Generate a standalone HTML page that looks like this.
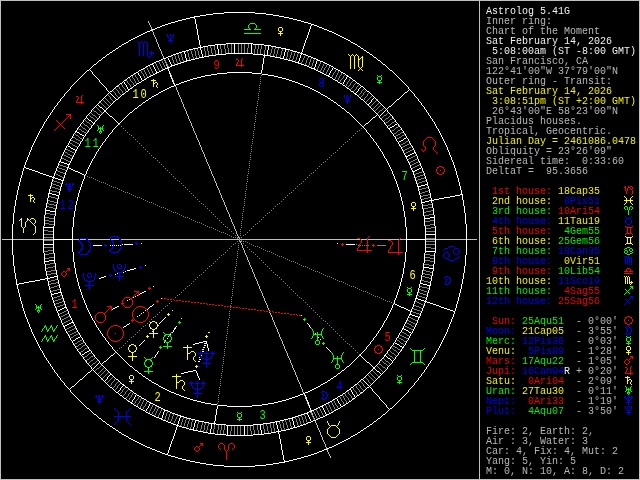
<!DOCTYPE html>
<html><head><meta charset="utf-8"><title>Astrolog 5.41G</title>
<style>
html,body{margin:0;padding:0;background:#000;}
#c{position:relative;width:640px;height:480px;background:#000;overflow:hidden;}
svg{position:absolute;left:0;top:0;}
#g path{fill:none;stroke-width:1;stroke-linecap:square;}
#hn text{font-family:"Liberation Mono",monospace;font-size:13px;letter-spacing:2.2px;}
#hn{will-change:transform;}
#side{will-change:transform;opacity:.95;position:absolute;left:486px;top:7px;font-family:"Liberation Mono",monospace;font-size:10px;line-height:10px;color:#c0c0c0;}
#side div{height:10px;white-space:pre;}
.w{color:#fff}.y{color:#ff0}.r{color:#f00}.g{color:#0f0}.b{color:#00f}
</style></head><body>
<div id="c">
<svg width="640" height="480" viewBox="0 0 640 480">
<rect x="0" y="0" width="640" height="480" fill="#000"/>
<g id="g" transform="translate(0.5,0.5)" shape-rendering="crispEdges">
<path class="frame" d="M0 0h639m-639 1v477m479-477v477m160-477v477m-639 1h639" stroke="#c0c0c0"/>
<path class="axes" d="M148 21v1m1 1v1m1 1v1m1 1v2m1 1v1m1 1v2m1 1v1m1 1v1m1 1v2m1 1v1m1 1v2m1 1v1m1 1v1m1 1v2m1 1v1m1 1v2m1 1v1m1 1v1m1 1v2m1 1v1m1 1v2m1 1v1m1 1v1m1 1v2m1 1v1m1 1v2m1 1v1m1 1v1m1 1v2m1 1v1m1 1v2m1 1v1m1 1v1m1 1v2m1 1v1m1 1v2m1 1v1m1 1v1m1 1v2m1 1v1m1 1v2m1 1v1m1 1v1m1 1v2m1 1v1m1 1v2m1 1v1m1 1v1m1 1v2m1 1v1m1 1v1m1 1v2m1 1v1m1 1v2m1 1v1m1 1v1m1 1v2m1 1v1m1 1v2m1 1v1m1 1v1m1 1v2m1 1v1m1 1v2m1 1v1m1 1v1m1 1v2m1 1v1m1 1v2m1 1v1m1 1v1m1 1v2m1 1v1m1 1v2m1 1v1m1 1v1m1 1v2m1 1v1m1 1v2m1 1v1m1 1v1m1 1v2m1 1v1m1 1v2m1 1v1m1 1v1m1 1v2m1 1v1m1 1v2m1 1v1m1 1v1m1 1v0m-237 1h474m-237 1v0m1 1v1m1 1v1m1 1v2m1 1v1m1 1v2m1 1v1m1 1v1m1 1v2m1 1v1m1 1v2m1 1v1m1 1v1m1 1v2m1 1v1m1 1v2m1 1v1m1 1v1m1 1v2m1 1v1m1 1v2m1 1v1m1 1v1m1 1v2m1 1v1m1 1v2m1 1v1m1 1v1m1 1v2m1 1v1m1 1v2m1 1v1m1 1v1m1 1v2m1 1v1m1 1v2m1 1v1m1 1v1m1 1v2m1 1v1m1 1v2m1 1v1m1 1v1m1 1v2m1 1v1m1 1v2m1 1v1m1 1v1m1 1v2m1 1v1m1 1v1m1 1v2m1 1v1m1 1v2m1 1v1m1 1v1m1 1v2m1 1v1m1 1v2m1 1v1m1 1v1m1 1v2m1 1v1m1 1v2m1 1v1m1 1v1m1 1v2m1 1v1m1 1v2m1 1v1m1 1v1m1 1v2m1 1v1m1 1v2m1 1v1m1 1v1m1 1v2m1 1v1m1 1v2m1 1v1m1 1v1m1 1v2m1 1v1m1 1v2m1 1v1m1 1v1m1 1v2m1 1v1m1 1v2m1 1v1m1 1v1m1 1v1" stroke="#c0c0c0"/>
<path class="deg" d="M227 43v4m4-4v10m7-10v10m3-10v10m3-10v10m4-10v4m-28-3v4m4-4v4m31-4v4m3-4v4m3-4v4m-51-3v2m4-2v4m51-4v4m-61-3v4m3-4v4m65-4v2m3-2v2m3-1v2m-84-1v2m3-2v2m14-2v4m17-4v5m19-5v5m35-5v2m-92-1v1m31-1v4m4-4v4m29-4v4m3-4v4m3-4v5m11-5v3m3-3v4m14-4v2m-101-1v2m28-2v4m49-4v4m13-4v3m15-3v1m-101 0v2m4-2v4m3-4v3m7-3v5m3-5v4m73-4v3m14-3v1m-115 0v1m107-1v4m4-4v2m7-2v1m-121 0v1m11-1v3m24-3v2m58-2v2m24-2v2m-120-1v1m7-1v2m11-2v2m81-2v2m3-2v2m21-2v2m8-2v1m-134 0v1m7-1v2m21-2v2m81-2v2m10-2v2m-115-1v2m21-2v2m97-2v2m11-2v1m4-1v1m-136 0v2m10-2v2m7-2v2m4-2v1m93-1v2m10-2v2m15-2v1m-147 0v1m15-1v2m110-2v1m14-1v1m4-1v1m7-1v1m-153 0v1m15-1v2m116-2v1m18-1v2m-145-1v1m8-1v2m10-2v1m112-1v1m7-1v1m4-1v2m7-2v2m-155-1v0m4 0v1m18-1v1m141-1v0m-166 1v1m4-1v1m7-1v1m11-1v1m124-1v1m8-1v2m11-2v1m4-1v1m-161 0v1m11-1v1m131-1v1m7-1v2m-156-1v1m4-1v1m7-1v1m152-1v1m4-1v1m4-1v0m-178 1v1m15-1v1m144-1v1m18-1v1m4-1v0m-173 1v1m4-1v1m7-1v1m143-1v1m7-1v1m4-1v1m7-1v1m-183 0v0m4 0v1m15-1v1m160-1v0m-182 1v1m4-1v1m11-1v1m4-1v1m155-1v1m4-1v1m3-1v1m4-1v1m-177 0v1m185-1v0m-196 1v0m4 0v1m4-1v1m11-1v1m161-1v1m3-1v1m4-1v1m8-1v1m4-1v0m-198 1v1m11-1v1m186-1v1m-193 0v1m4-1v1m173-1v0m4 0v1m8-1v0m8 0v0m-200 1v0m11 0v1m180-1v1m4-1v1m4-1v1m-207 0v0m9 0v1m3-1v1m4-1v1m175-1v0m20 0v0m-214 1v0m4 0v1m197-1v1m4-1v1m4-1v0m4 0v0m-212 1v1m12-1v1m3-1v1m192-1v1m4-1v1m-215 0v0m8 0v0m195 0v0m4 0v1m-206 0v0m4 0v0m4 0v1m8-1v0m193 0v1m4-1v0m8 0v0m-225 1v0m5 0v1m4-1v1m200-1v0m7 0v0m8 0v1m-223 0v0m12 0v1m199-1v0m3 0v1m13-1v0m-226 1v1m4-1v0m4 0v1m213-1v0m4 0v0m-220 1v0m7 0v0m200 0v0m8 0v1m4-1v0m5 0v0m-236 1v0m8 0v0m5 0v1m3-1v0m214 0v1m5-1v0m-234 1v0m8 0v0m217 0v1m8-1v0m5 0v0m-242 1v0m5 0v1m8-1v1m4-1v0m215 0v0m4 0v1m5-1v0m-240 1v0m227 0v0m3 0v0m9 0v0m-238 1v1m4-1v0m8 0v0m216 0v0m5 0v0m4 0v1m-241 0v0m9 0v0m227 0v0m13 0v0m-248 1v0m4 0v0m5 0v1m225-1v0m5 0v0m8 0v0m-251 1v0m5 0v0m4 0v0m233 0v0m8 0v0m4 0v0m-253 1v0m5 0v1m4-1v1m4-1v0m227 0v0m8 0v1m4-1v0m-251 1v0m250 0v0m5 0v0m-254 1v1m4-1v0m4 0v0m237 0v0m3 0v1m5-1v0m-261 1v0m13 0v0m239 0v0m8 0v1m-259 0v0m8 0v0m5 0v0m237 0v0m4 0v0m10 0v0m-263 1v0m8 0v0m244 0v0m5 0v0m5 0v0m-267 1v0m6 0v1m8-1v0m242 0v0m5 0v0m5 0v0m-265 1v0m259 0v1m5-1v0m-267 1v0m4 0v0m5 0v0m257 0v0m9 0v0m-274 1v0m4 0v0m5 0v0m251 0v0m4 0v0m9 0v0m-277 1v0m5 0v0m4 0v0m5 0v0m253 0v0m9 0v0m-275 1v0m5 0v0m4 0v0m256 0v0m9 0v0m5 0v0m-278 1v0m5 0v0m4 0v0m263 0v0m5 0v0m-276 1v0m5 0v0m4 0v0m261 0v0m5 0v0m4 0v0m-278 1v0m5 0v0m263 0v0m5 0v0m4 0v0m-285 1v0m9 0v0m5 0v0m261 0v0m5 0v0m4 0v0m-283 1v0m9 0v0m269 0v0m4 0v0m6 0v0m-287 1v0m9 0v0m267 0v0m4 0v0m6 0v0m-291 1v0m6 0v0m274 0v0m4 0v0m6 0v0m-289 1v0m6 0v0m276 0v0m5 0h1m-287 1h1m5 0v0m274 0v0m5 0v0m-289 1v0m6 0v0m5 0v0m277 0v0m10 0v0m-297 1v0m6 0v0m5 0v0m275 0v0m10 0v0m-299 1v0m4 0v0m6 0h1m287 0v0m-297 1v0m4 0h1m6 0v0m284 0h1m5 0v0m-300 1v0m5 0v0m288 0v0m6 0v0m-298 1h1m4 0v0m286 0v0m6 0v0m5 0v0m-300 1v0m4 0v0m284 0v0m5 0h1m5 0v0m-308 1v0m10 0v0m291 0v0m5 0h1m-306 1v0m10 0v0m289 0v0m5 0v0m6 0v0m-309 1v0m297 0v0m5 0v0m6 0v0m-312 1v0m5 0h1m298 0h1m5 0h1m-310 1v0m6 0v0m296 0v0m6 0v0m-307 1v0m6 0v0m300 0v0m-310 1v0m5 0h1m5 0v0m297 0h1m10 0v0m-318 1v0m6 0v0m300 0v0m11 0v0m-316 1v0m6 0v0m308 0h1m-319 1v0m5 0h1m5 0v0m306 0v0m6 0v0m-322 1h1m5 0v0m309 0v0m6 0v0m-319 1v0m5 0v0m306 0h1m5 0h1m-317 1h1m4 0v0m304 0v0m6 0v0m6 0v0m-319 1h1m311 0v0m5 0h1m-328 1v0m12 0v0m308 0h1m5 0v0m-325 1v0m318 0v0m5 0h1m5 0v0m-328 1h1m319 0h1m5 0h1m-331 1v0m6 0v0m317 0v0m6 0v0m-328 1h1m5 0v0m320 0h1m-325 1v0m5 0h1m316 0h1m-328 1v0m6 0h1m5 0v0m314 0v0m-325 1h1m6 0h1m329 0v0m-335 1h1m6 0v0m326 0h1m-338 1v0m6 0h1m329 0v0m-335 1h1m6 0h1m325 0h1m5 0h1m-338 1v0m7 0v0m322 0h1m5 0h1m-335 1h1m326 0v0m5 0h1m-331 1h1m327 0h1m7 0v0m-334 1v0m324 0h1m7 0h1m-345 1v0m342 0h1m-342 1h1m338 0h1m6 0h1m-345 1h1m334 0h1m6 0h1m-347 1v0m6 0h1m337 0h1m-344 1h1m6 0h1m333 0h1m-340 1v0m7 0v0m330 0h1m-343 1h1m5 0h1m-5 1h1m5 0h1m344 0h1m-350 1h1m5 0v0m341 0h1m-353 1v0m7 0h1m342 0h1m-350 1h1m7 0h1m338 0h1m7 0v0m-353 1h1m342 0h1m7 0h1m-350 1h1m346 0h1m-346 1h1m342 0h1m6 0h1m-10 1h1m6 0h1m-3 1h1m-357 1h1m353 0h1m6 0h1m-360 1h2m348 0h1m6 0h1m-355 1h2m350 0h1m-359 1h1m8 0h1m346 0h1m-355 1h2m350 0h1m-350 1h2m-8 1h1m8 0h1m-8 1h1m363 0h1m-363 1h2m357 0h2m-367 1h1m8 0h1m352 0h2m-362 1h1m357 0h1m8 0h1m-366 1h1m361 0h2m-362 1h1m356 0h2m-357 1h1m352 0h1m8 0h1m-4 1h2m-5 1h2m-368 1h1m363 0h1m8 0h1m-372 1h2m366 0h2m-367 1h2m360 0h2m-370 1h1m8 0h1m356 0h1m-365 1h2m1 1h2m-8 1h1m8 0h1m-8 1h2m372 0h2m-373 1h2m365 0h3m-367 1h1m360 0h2m-372 1h2m377 0h1m-377 1h4m369 0h2m-370 1h2m363 0h2m-4 1h1m7 1h2m-7 1h4m-379 1h2m370 0h2m-371 1h3m374 0h2m-375 1h2m367 0h3m-6 1h2m-376 1h2m1 1h3m1 1h2m-10 1h2m1 1h4m375 0h4m-378 1h2m366 0h5m-381 1h2m1 1h3m376 0h4m-379 1h2m368 0h4m4 2h2m-7 1h4m-7 1h2m-380 1h4m1 1h4m375 0h4m-9 1h4m-384 2h4m1 1h5m-10 2h4m382 0h4m-385 1h4m372 0h4m-385 2h4m1 1h4m377 0h4m-9 1h4m2 2h4m-10 1h5m-387 2h4m1 1h5m372 0h10m-392 3h10m-10 3h10m372 1h10m-392 2h10m372 1h10m-10 3h10m-392 3h10m372 0h5m1 1h4m-387 2h5m-10 1h4m2 2h4m-9 1h4m377 0h4m1 1h4m-385 2h4m372 0h4m-385 1h4m382 0h4m-10 2h5m1 1h4m-384 2h4m-9 1h4m375 0h4m1 1h4m-380 1h2m-7 1h4m-7 1h2m4 2h4m368 0h2m-379 1h4m376 0h3m1 1h2m-381 1h5m366 0h2m-378 1h4m375 0h4m1 1h2m-10 1h2m1 1h3m1 1h2m-376 1h2m-6 1h3m367 0h2m-375 1h2m374 0h3m-371 1h2m370 0h2m-379 1h4m-7 1h2m7 1h1m-4 1h2m363 0h2m-370 1h2m369 0h4m-377 1h1m377 0h2m-372 1h2m360 0h1m-367 1h3m365 0h2m-373 1h2m372 0h2m-8 1h1m8 0h1m-8 1h2m1 1h2m-365 1h1m356 0h1m8 0h1m-370 1h2m360 0h2m-367 1h2m366 0h2m-372 1h1m8 0h1m363 0h1m-368 1h2m-5 1h2m-4 1h1m8 0h1m352 0h1m-357 1h2m356 0h1m-362 1h2m361 0h1m-366 1h1m8 0h1m357 0h1m-362 1h2m352 0h1m8 0h1m-367 1h2m357 0h2m-363 1h1m363 0h1m-8 1h1m8 0h1m-8 1h2m-350 1h1m350 0h2m-355 1h1m346 0h1m8 0h1m-359 1h1m350 0h2m-355 1h1m6 0h1m348 0h2m-360 1h1m6 0h1m353 0h1m-357 1h1m-3 1h1m6 0h1m-10 1h1m6 0h1m342 0h1m-346 1h1m346 0h1m-350 1h1m7 0h1m342 0h1m-353 1v0m7 0h1m338 0h1m7 0h1m-350 1h1m342 0h1m7 0v0m-353 1h1m341 0v0m5 0h1m-350 1h1m344 0h1m5 0h1m-5 1h1m5 0h1m-343 1h1m330 0v0m7 0v0m-340 1h1m333 0h1m6 0h1m-344 1h1m337 0h1m6 0v0m-347 1h1m6 0h1m334 0h1m-345 1h1m6 0h1m338 0h1m-342 1h1m342 0v0m-345 1h1m7 0h1m324 0v0m-334 1v0m7 0h1m327 0h1m-331 1h1m5 0v0m326 0h1m-335 1h1m5 0h1m322 0v0m7 0v0m-338 1h1m5 0h1m325 0h1m6 0h1m-335 1v0m329 0h1m6 0v0m-338 1h1m326 0v0m6 0h1m-335 1v0m329 0h1m6 0h1m-325 1v0m314 0v0m5 0h1m6 0v0m-328 1h1m316 0h1m5 0v0m-325 1h1m320 0v0m5 0h1m-328 1v0m6 0v0m317 0v0m6 0v0m-331 1h1m5 0h1m319 0h1m-328 1v0m5 0h1m5 0v0m318 0v0m-325 1v0m5 0h1m308 0v0m12 0v0m-328 1h1m5 0v0m311 0h1m-319 1v0m6 0v0m6 0v0m304 0v0m4 0h1m-317 1h1m5 0h1m306 0v0m5 0v0m-319 1v0m6 0v0m309 0v0m5 0h1m-322 1v0m6 0v0m306 0v0m5 0h1m5 0v0m-319 1h1m308 0v0m6 0v0m-316 1v0m11 0v0m300 0v0m6 0v0m-318 1v0m10 0h1m297 0v0m5 0h1m5 0v0m-310 1v0m300 0v0m6 0v0m-307 1v0m6 0v0m296 0v0m6 0v0m-310 1h1m5 0h1m298 0h1m5 0v0m-312 1v0m6 0v0m5 0v0m297 0v0m-309 1v0m6 0v0m5 0v0m289 0v0m10 0v0m-306 1h1m5 0v0m291 0v0m10 0v0m-308 1v0m5 0h1m5 0v0m284 0v0m4 0v0m-300 1v0m5 0v0m6 0v0m286 0v0m4 0h1m-298 1v0m6 0v0m288 0v0m5 0v0m-300 1v0m5 0h1m284 0v0m6 0h1m4 0v0m-297 1v0m287 0h1m6 0v0m4 0v0m-299 1v0m10 0v0m275 0v0m5 0v0m6 0v0m-297 1v0m10 0v0m277 0v0m5 0v0m6 0v0m-289 1v0m5 0v0m274 0v0m5 0h1m-287 1h1m5 0v0m276 0v0m6 0v0m-289 1v0m6 0v0m4 0v0m274 0v0m6 0v0m-291 1v0m6 0v0m4 0v0m267 0v0m9 0v0m-287 1v0m6 0v0m4 0v0m269 0v0m9 0v0m-283 1v0m4 0v0m5 0v0m261 0v0m5 0v0m9 0v0m-285 1v0m4 0v0m5 0v0m263 0v0m5 0v0m-278 1v0m4 0v0m5 0v0m261 0v0m4 0v0m5 0v0m-276 1v0m5 0v0m263 0v0m4 0v0m5 0v0m-278 1v0m5 0v0m9 0v0m256 0v0m4 0v0m5 0v0m-275 1v0m9 0v0m253 0v0m5 0v0m4 0v0m5 0v0m-277 1v0m9 0v0m4 0v0m251 0v0m5 0v0m4 0v0m-274 1v0m9 0v0m4 0v1m253-1v0m5 0v0m4 0v0m-267 1v0m259 0v1m5-1v0m-265 1v0m5 0v0m5 0v0m242 0v0m14 0v0m-267 1v0m5 0v0m5 0v0m244 0v0m8 0v0m-263 1v0m5 0v1m5-1v0m4 0v0m237 0v0m5 0v0m8 0v0m-255 1v1m4-1v0m239 0v0m5 0v1m8-1v0m-261 1v0m8 0v0m237 0v0m4 0v0m-250 1v0m5 0v0m3 0v1m239-1v1m4-1v1m4-1v0m-251 1v0m12 0v0m227 0v0m13 0v0m-253 1v0m4 0v0m8 0v0m229 0v1m4-1v0m4 0v0m5 0v0m-251 1v0m8 0v0m5 0v0m230 0v0m4 0v0m-248 1v0m8 0v1m5-1v0m227 0v0m5 0v1m4-1v0m-237 1v0m5 0v0m216 0v0m8 0v0m-234 1v0m4 0v1m5-1v0m3 0v0m215 0v1m8-1v1m4-1v0m-240 1v0m9 0v0m3 0v1m212-1v0m17 0v0m-242 1v0m5 0v0m4 0v1m217-1v1m4-1v0m8 0v0m-234 1v0m8 0v1m211-1v0m8 0v0m8 0v0m-236 1v0m5 0v0m12 0v0m200 0v0m4 0v1m3-1v0m5 0v1m-225 0v0m4 0v0m8 0v1m202-1v1m7-1v0m-222 1v0m4 0v1m12-1v0m203 0v1m4-1v1m4-1v0m-215 1v0m3 0v1m4-1v0m197 0v1m12-1v0m-225 1v0m8 0v0m7 0v1m190-1v0m12 0v0m4 0v0m-214 1v1m4-1v1m8-1v0m184 0v1m3-1v1m8-1v0m4 0v1m4-1v0m-208 1v1m4-1v1m197-1v1m-209 0v0m4 0v0m190 0v1m4-1v1m3-1v1m12-1v0m-214 1v0m4 0v1m4-1v1m4-1v1m8-1v0m172 0v1m19-1v0m-192 1v1m177-1v1m4-1v1m3-1v0m-200 1v0m4 0v1m4-1v0m12 0v0m170 0v1m11-1v1m-194 0v1m8-1v1m4-1v1m3-1v1m161-1v1m11-1v1m4-1v1m-195 0v0m188 0v1m11-1v0m-196 1v0m8 0v1m4-1v1m3-1v1m4-1v1m155-1v1m4-1v1m11-1v1m4-1v1m-22 0v1m15-1v1m-179 0v1m4-1v0m3 0v1m4-1v1m7-1v1m143-1v1m7-1v1m4-1v1m11-1v0m-180 1v1m18-1v1m144-1v1m15-1v1m-181 0v0m7 0v1m4-1v1m7-1v2m145-2v1m7-1v1m4-1v1m-171 0v0m18 0v2m4-2v1m131-1v1m11-1v1m-161 0v1m4-1v1m19-1v1m124-1v1m11-1v1m7-1v1m4-1v1m-158 0v2m7-2v2m126-2v1m7-1v2m11-2v1m-159 0v0m11 0v2m8-2v1m7-1v1m112-1v1m7-1v2m11-2v1m7-1v0m-134 1v1m113-1v2m18-2v1m-153 0v1m7-1v1m4-1v1m7-1v2m7-2v1m3-1v2m97-2v2m7-2v2m10-2v2m8-2v1m-147 0v1m18-1v2m97-2v2m3-2v1m18-1v2m-133-1v1m4-1v1m14-1v2m10-2v2m81-2v2m21-2v2m-119-1v2m10-2v4m11-4v2m3-2v2m68-2v5m13-5v2m4-2v3m7-3v2m10-2v1m-134 0v1m11-1v2m24-2v2m58-2v2m4-2v4m13-4v4m21-4v1m-117 0v2m10-2v3m17-3v4m4-4v5m45-5v4m17-4v3m21-3v1m-121 0v1m21-1v3m3-3v4m17-4v4m3-4v4m7-4v5m3-5v10m3-10v10m3-10v10m7-10v10m3-10v5m3-5v4m4-4v4m30-4v2m11-2v1m-115 0v1m24-1v3m60-3v4m24-4v2m-105-1v1m4-1v2m6-1v2m75-2v4m3-4v4m7-4v2m3-2v2m4-2v1m-88 0v2m13-2v4m51-4v4m-61-3v2m3-2v2m11-2v4m3-4v4m3-4v4m31-4v4m4-4v4m-28-3v4m21-4v4m17-4v2" stroke="#808080"/>
<path class="deg5" d="M234 43v10m17-10v10m-34-9v4m51-3v4m-68-2v2m18 0v5m67-5v2m-84-1v3m66-3v5m-83-4v2m100-1v3m17-2v1m-116 0v3m17-3v2m98-1v2m-17-1v2m-116-1v0m1 1v1m18-1v2m113-2v2m18-1v1m-148 0v1m129 0v1m18-1v2m-146-1v1m-18 0v1m19 0v1m144-1v2m-162-1v1m1 1v1m160-1v1m19-1v0m-1 1v1m-177 0v1m176 0v0m-175 1v1m174-1v1m-193 0v0m1 1v1m191-1v1m-190 1v0m189 0v0m-188 1v1m207-1v0m-1 1v1m-205 0v1m204 0v0m-203 1v0m202 0v1m-221 0v0m1 1v1m219-1v1m-218 1v0m217 0v0m-216 1v1m235 0v0m-234 1v1m233-1v0m-1 1v0m-231 1v0m230 0v1m-1 1v0m-248 1v0m247 0v0m-246 1v0m245 0v0m-244 1v0m1 1v0m1 1v0m1 1v0m260 0v0m-259 1v0m258 0v0m-257 1v0m256 0v0m-1 1v1m-1 1v0m-1 1v0m-272 1v0m271 0v0m-270 1v0m1 1v0m1 1h1m1 1v0m1 1v0m283 0v0m-282 1v0m281 0v0m-1 1v0m-1 1v0m-1 1v0m-1 1v0m-1 1v0m-1 1v0m-293 1v0m1 1v0m1 1v0m1 1h1m1 1v0m1 1v0m1 1v0m304 0v0m-2 1h1m-2 1v0m-2 1h1m-3 1h1m-2 1v0m-313 3v0m1 1h1m1 1v0m1 1h1m1 1h1m1 1v0m322 1v0m-2 1h1m-2 1v0m-2 1h1m-3 1h1m-2 1v0m-331 3v0m1 1h1m1 1v0m1 1h1m1 1h1m1 1v0m339 2h1m-3 1h1m-3 1h1m-3 1h1m-3 1h1m-348 5h1m1 1h2m1 1h2m1 1h1m353 3v0m-2 1h1m-3 1h1m-3 1h1m-3 1h1m-361 6h1m1 1h2m1 1h2m1 1h1m363 4h2m-6 1h3m-6 1h2m-371 7h2m1 1h3m1 1h2m371 5h2m-6 1h3m-6 1h2m-379 8h4m1 1h5m375 6h4m-10 1h5m-386 9h10m372 7h10m-392 10h10m372 7h10m-386 9h5m-10 1h4m375 6h5m1 1h4m-379 8h2m-6 1h3m-6 1h2m371 5h2m1 1h3m1 1h2m-371 7h2m-6 1h3m-6 1h2m363 4h1m1 1h2m1 1h2m1 1h1m-361 6h1m-3 1h1m-3 1h1m-3 1h1m-2 1v0m353 3h1m1 1h2m1 1h2m1 1h1m-348 5h1m-3 1h1m-3 1h1m-3 1h1m-3 1h1m339 2v0m1 1h1m1 1h1m1 1v0m1 1h1m1 1v0m-331 3v0m-2 1h1m-3 1h1m-2 1v0m-2 1h1m-2 1v0m322 1v0m1 1h1m1 1h1m1 1v0m1 1h1m1 1v0m-313 3v0m-2 1h1m-3 1h1m-2 1v0m-2 1h1m-2 1v0m304 0v0m1 1v0m1 1v0m1 1h1m1 1v0m1 1v0m1 1v0m-293 1v0m-1 1v0m-1 1v0m-1 1v0m-1 1v0m-1 1v0m-1 1v0m281 0v0m-282 1v0m283 0v0m1 1v0m1 1h1m1 1v0m1 1v0m-270 1v0m271 0v0m-272 1v0m-1 1v0m-1 1v1m-1 1v0m256 0v0m-257 1v0m258 0v0m-259 1v0m260 0v0m1 1v0m1 1v0m1 1v0m-244 1v0m245 0v0m-246 1v0m247 0v0m-248 1v0m-1 1v1m230 0v0m-231 1v0m232 0v1m-233 0v0m-1 1v0m235 0v1m-216 1v0m217 0v0m-218 1v1m219-1v1m-220 1v1m221-1v0m-19 1v0m-203 1v0m204 0v1m-205 0v1m206 0v1m-207 0v0m19 1v0m189 0v0m-190 1v1m191-1v1m-192 1v1m174-1v1m19-1v0m-194 2v0m176 0v1m-177 0v1m18 0v1m160-1v1m-179 0v0m18 1v2m162-2v1m-18 0v1m19 0v1m-164 0v2m146-2v1m-128 0v1m129 0v1m-148 0v1m18-1v2m113-2v2m18-1v1m-115 0v2m-17-1v2m115-2v3m18-3v0m-35 1v2m-82-1v3m17-3v5m-34-4v1m83-1v5m-33-4v10m17-10v10m33-10v3m17-3v2m-101 0v2m17 0v4m68-4v2m-17-1v4" stroke="#ffffff"/>
<path class="ring" d="M224 12h30m-41 1h10m32 0h10m-59 1h6m54 0h6m-72 1h5m68 0h5m-83 1h4m80 0h4m-93 1h4m90 0h4m-102 1h3m100 0h3m-110 1h3m108 0h3m-118 1h3m116 0h3m-125 1h2m124 0h2m-132 1h3m130 0h3m-139 1h2m138 0h2m-145 1h2m144 0h2m-151 1h2m150 0h2m-156 1h1m156 0h1m-161 1h2m160 0h2m-166 1h1m166 0h1m-171 1h2m170 0h2m-176 1h1m176 0h1m-181 1h2m180 0h2m-186 1h1m186 0h1m-190 1h1m190 0h1m-194 1h1m194 0h1m-198 1h1m198 0h1m-202 1h1m202 0h1m-206 1h1m206 0h1m-210 1h1m210 0h1m-214 1h1m214 0h1m-218 1h1m218 0h1m-221 1v0m222 0v0m-224 1h1m224 0h1m-228 1h1m228 0h1m-232 1h1m232 0h1m-235 1v0m236 0v0m-238 1h1m238 0h1m-241 1v0m242 0v0m-244 1h1m244 0h1m-247 1v0m248 0v0m-250 1h1m250 0h1m-253 1v0m254 0v0m-256 1h1m256 0h1m-259 1v0m260 0v0m-262 1h1m262 0h1m-265 1v0m266 0v0m-267 1v0m268 0v0m-270 1h1m270 0h1m-273 1v0m274 0v0m-275 1v0m276 0v0m-278 1h1m278 0h1m-281 1v0m282 0v0m-283 1v0m284 0v0m-285 1v0m286 0v0m-288 1h1m288 0h1m-291 1v0m292 0v0m-293 1v0m294 0v0m-295 1v0m296 0v0m-297 1v0m298 0v0m-299 1v0m300 0v0m-302 1h1m302 0h1m-305 1v0m306 0v0m-307 1v0m308 0v0m-309 1v0m310 0v0m-311 1v0m312 0v0m-313 1v0m314 0v0m-315 1v0m316 0v0m-317 1v0m318 0v0m-319 1v0m320 0v0m-321 1v0m322 0v0m-323 1v0m324 0v0m-325 1v0m326 0v0m-327 1v0m328 0v0m-329 1v0m330 0v0m-331 1v0m332 0v0m-333 1v0m334 0v0m-335 1v0m336 0v0m-337 1v1m338-1v1m-339 1v0m340 0v0m-341 1v0m342 0v0m-343 1v0m344 0v0m-345 1v0m346 0v0m-347 1v0m348 0v0m-349 1v1m350-1v1m-351 1v0m352 0v0m-353 1v0m354 0v0m-355 1v0m356 0v0m-357 1v1m358-1v1m-359 1v0m360 0v0m-361 1v0m362 0v0m-363 1v1m364-1v1m-365 1v0m366 0v0m-367 1v0m368 0v0m-369 1v1m370-1v1m-371 1v0m372 0v0m-373 1v1m374-1v1m-375 1v0m376 0v0m-377 1v1m378-1v1m-379 1v0m380 0v0m-381 1v1m382-1v1m-383 1v0m384 0v0m-385 1v1m386-1v1m-387 1v0m388 0v0m-389 1v1m390-1v1m-391 1v1m392-1v1m-393 1v1m394-1v1m-395 1v0m396 0v0m-397 1v1m398-1v1m-399 1v1m400-1v1m-401 1v1m402-1v1m-403 1v1m404-1v1m-405 1v1m406-1v1m-407 1v1m408-1v1m-409 1v1m410-1v1m-411 1v1m412-1v1m-413 1v1m414-1v1m-415 1v2m416-2v2m-417 1v1m418-1v1m-419 1v2m420-2v2m-421 1v1m422-1v1m-423 1v2m424-2v2m-425 1v1m426-1v1m-427 1v2m428-2v2m-429 1v2m430-2v2m-431 1v2m432-2v2m-433 1v3m434-3v3m-435 1v2m436-2v2m-437 1v3m438-3v3m-439 1v3m440-3v3m-441 1v3m442-3v3m-443 1v4m444-4v4m-445 1v4m446-4v4m-447 1v5m448-5v5m-449 1v6m450-6v6m-451 1v10m452-10v10m-453 1v30m454-30v30m-453 1v10m452-10v10m-451 1v6m450-6v6m-449 1v5m448-5v5m-447 1v4m446-4v4m-445 1v4m444-4v4m-443 1v3m442-3v3m-441 1v3m440-3v3m-439 1v3m438-3v3m-437 1v2m436-2v2m-435 1v3m434-3v3m-433 1v2m432-2v2m-431 1v2m430-2v2m-429 1v2m428-2v2m-427 1v1m426-1v1m-425 1v2m424-2v2m-423 1v1m422-1v1m-421 1v2m420-2v2m-419 1v1m418-1v1m-417 1v2m416-2v2m-415 1v1m414-1v1m-413 1v1m412-1v1m-411 1v1m410-1v1m-409 1v1m408-1v1m-407 1v1m406-1v1m-405 1v1m404-1v1m-403 1v1m402-1v1m-401 1v1m400-1v1m-399 1v1m398-1v1m-397 1v0m396 0v0m-395 1v1m394-1v1m-393 1v1m392-1v1m-391 1v1m390-1v1m-389 1v0m388 0v0m-387 1v1m386-1v1m-385 1v0m384 0v0m-383 1v1m382-1v1m-381 1v0m380 0v0m-379 1v1m378-1v1m-377 1v0m376 0v0m-375 1v1m374-1v1m-373 1v0m372 0v0m-371 1v1m370-1v1m-369 1v0m368 0v0m-367 1v0m366 0v0m-365 1v1m364-1v1m-363 1v0m362 0v0m-361 1v0m360 0v0m-359 1v1m358-1v1m-357 1v0m356 0v0m-355 1v0m354 0v0m-353 1v0m352 0v0m-351 1v1m350-1v1m-349 1v0m348 0v0m-347 1v0m346 0v0m-345 1v0m344 0v0m-343 1v0m342 0v0m-341 1v0m340 0v0m-339 1v1m338-1v1m-337 1v0m336 0v0m-335 1v0m334 0v0m-333 1v0m332 0v0m-331 1v0m330 0v0m-329 1v0m328 0v0m-327 1v0m326 0v0m-325 1v0m324 0v0m-323 1v0m322 0v0m-321 1v0m320 0v0m-319 1v0m318 0v0m-317 1v0m316 0v0m-315 1v0m314 0v0m-313 1v0m312 0v0m-311 1v0m310 0v0m-309 1v0m308 0v0m-307 1v0m306 0v0m-305 1h1m302 0h1m-302 1v0m300 0v0m-299 1v0m298 0v0m-297 1v0m296 0v0m-295 1v0m294 0v0m-293 1v0m292 0v0m-291 1h1m288 0h1m-288 1v0m286 0v0m-285 1v0m284 0v0m-283 1v0m282 0v0m-281 1h1m278 0h1m-278 1v0m276 0v0m-275 1v0m274 0v0m-273 1h1m270 0h1m-270 1v0m268 0v0m-267 1v0m266 0v0m-265 1h1m262 0h1m-262 1v0m260 0v0m-259 1h1m256 0h1m-256 1v0m254 0v0m-253 1h1m250 0h1m-250 1v0m248 0v0m-247 1h1m244 0h1m-244 1v0m242 0v0m-241 1h1m238 0h1m-238 1v0m236 0v0m-235 1h1m232 0h1m-232 1h1m228 0h1m-228 1h1m224 0h1m-224 1v0m222 0v0m-221 1h1m218 0h1m-218 1h1m214 0h1m-214 1h1m210 0h1m-210 1h1m206 0h1m-206 1h1m202 0h1m-202 1h1m198 0h1m-198 1h1m194 0h1m-194 1h1m190 0h1m-190 1h1m186 0h1m-186 1h2m180 0h2m-181 1h1m176 0h1m-176 1h2m170 0h2m-171 1h1m166 0h1m-166 1h2m160 0h2m-161 1h1m156 0h1m-156 1h2m150 0h2m-151 1h2m144 0h2m-145 1h2m138 0h2m-139 1h3m130 0h3m-132 1h2m124 0h2m-125 1h3m116 0h3m-118 1h3m108 0h3m-110 1h3m100 0h3m-102 1h4m90 0h4m-93 1h4m80 0h4m-83 1h5m68 0h5m-72 1h6m54 0h6m-59 1h10m32 0h10m-41 1h30" stroke="#ffffff"/>
<path class="ring" d="M226 43h26m-37 1h10m28 0h10m-55 1h6m50 0h6m-67 1h4m64 0h4m-77 1h4m74 0h4m-87 1h4m84 0h4m-96 1h3m94 0h3m-103 1h2m102 0h2m-110 1h3m108 0h3m-117 1h2m116 0h2m-123 1h2m122 0h2m-129 1h2m128 0h2m-134 1h1m134 0h1m-139 1h2m138 0h2m-144 1h1m144 0h1m-149 1h2m148 0h2m-154 1h1m154 0h1m-158 1h1m158 0h1m-163 1h2m162 0h2m-168 1h1m168 0h1m-172 1h1m172 0h1m-176 1h1m176 0h1m-180 1h1m180 0h1m-184 1h1m184 0h1m-187 1v0m188 0v0m-190 1h1m190 0h1m-194 1h1m194 0h1m-198 1h1m198 0h1m-201 1v0m202 0v0m-204 1h1m204 0h1m-208 1h1m208 0h1m-211 1v0m212 0v0m-214 1h1m214 0h1m-217 1v0m218 0v0m-220 1h1m220 0h1m-223 1v0m224 0v0m-225 1v0m226 0v0m-228 1h1m228 0h1m-231 1v0m232 0v0m-233 1v0m234 0v0m-236 1h1m236 0h1m-239 1v0m240 0v0m-241 1v0m242 0v0m-244 1h1m244 0h1m-247 1v0m248 0v0m-249 1v0m250 0v0m-251 1v0m252 0v0m-253 1v0m254 0v0m-256 1h1m256 0h1m-259 1v0m260 0v0m-261 1v0m262 0v0m-263 1v0m264 0v0m-265 1v0m266 0v0m-267 1v0m268 0v0m-269 1v0m270 0v0m-271 1v0m272 0v0m-273 1v0m274 0v0m-275 1v0m276 0v0m-277 1v0m278 0v0m-279 1v0m280 0v0m-281 1v0m282 0v0m-283 1v0m284 0v0m-285 1v0m286 0v0m-287 1v0m288 0v0m-289 1v0m290 0v0m-291 1v0m292 0v0m-293 1v0m294 0v0m-295 1v1m296-1v1m-297 1v0m298 0v0m-299 1v0m300 0v0m-301 1v0m302 0v0m-303 1v0m304 0v0m-305 1v1m306-1v1m-307 1v0m308 0v0m-309 1v0m310 0v0m-311 1v1m312-1v1m-313 1v0m314 0v0m-315 1v0m316 0v0m-317 1v1m318-1v1m-319 1v0m320 0v0m-321 1v0m322 0v0m-323 1v1m324-1v1m-325 1v0m326 0v0m-327 1v1m328-1v1m-329 1v0m330 0v0m-331 1v1m332-1v1m-333 1v1m334-1v1m-335 1v0m336 0v0m-337 1v1m338-1v1m-339 1v1m340-1v1m-341 1v1m342-1v1m-343 1v0m344 0v0m-345 1v1m346-1v1m-347 1v1m348-1v1m-349 1v1m350-1v1m-351 1v1m352-1v1m-353 1v1m354-1v1m-355 1v2m356-2v2m-357 1v1m358-1v1m-359 1v1m360-1v1m-361 1v2m362-2v2m-363 1v1m364-1v1m-365 1v2m366-2v2m-367 1v1m368-1v1m-369 1v2m370-2v2m-371 1v2m372-2v2m-373 1v2m374-2v2m-375 1v3m376-3v3m-377 1v2m378-2v2m-379 1v3m380-3v3m-381 1v4m382-4v4m-383 1v4m384-4v4m-385 1v4m386-4v4m-387 1v6m388-6v6m-389 1v10m390-10v10m-391 1v26m392-26v26m-391 1v10m390-10v10m-389 1v6m388-6v6m-387 1v4m386-4v4m-385 1v4m384-4v4m-383 1v4m382-4v4m-381 1v3m380-3v3m-379 1v2m378-2v2m-377 1v3m376-3v3m-375 1v2m374-2v2m-373 1v2m372-2v2m-371 1v2m370-2v2m-369 1v1m368-1v1m-367 1v2m366-2v2m-365 1v1m364-1v1m-363 1v2m362-2v2m-361 1v1m360-1v1m-359 1v1m358-1v1m-357 1v2m356-2v2m-355 1v1m354-1v1m-353 1v1m352-1v1m-351 1v1m350-1v1m-349 1v1m348-1v1m-347 1v1m346-1v1m-345 1v0m344 0v0m-343 1v1m342-1v1m-341 1v1m340-1v1m-339 1v1m338-1v1m-337 1v0m336 0v0m-335 1v1m334-1v1m-333 1v1m332-1v1m-331 1v0m330 0v0m-329 1v1m328-1v1m-327 1v0m326 0v0m-325 1v1m324-1v1m-323 1v0m322 0v0m-321 1v0m320 0v0m-319 1v1m318-1v1m-317 1v0m316 0v0m-315 1v0m314 0v0m-313 1v1m312-1v1m-311 1v0m310 0v0m-309 1v0m308 0v0m-307 1v1m306-1v1m-305 1v0m304 0v0m-303 1v0m302 0v0m-301 1v0m300 0v0m-299 1v0m298 0v0m-297 1v1m296-1v1m-295 1v0m294 0v0m-293 1v0m292 0v0m-291 1v0m290 0v0m-289 1v0m288 0v0m-287 1v0m286 0v0m-285 1v0m284 0v0m-283 1v0m282 0v0m-281 1v0m280 0v0m-279 1v0m278 0v0m-277 1v0m276 0v0m-275 1v0m274 0v0m-273 1v0m272 0v0m-271 1v0m270 0v0m-269 1v0m268 0v0m-267 1v0m266 0v0m-265 1v0m264 0v0m-263 1v0m262 0v0m-261 1v0m260 0v0m-259 1h1m256 0h1m-256 1v0m254 0v0m-253 1v0m252 0v0m-251 1v0m250 0v0m-249 1v0m248 0v0m-247 1h1m244 0h1m-244 1v0m242 0v0m-241 1v0m240 0v0m-239 1h1m236 0h1m-236 1v0m234 0v0m-233 1v0m232 0v0m-231 1h1m228 0h1m-228 1v0m226 0v0m-225 1v0m224 0v0m-223 1h1m220 0h1m-220 1v0m218 0v0m-217 1h1m214 0h1m-214 1v0m212 0v0m-211 1h1m208 0h1m-208 1h1m204 0h1m-204 1v0m202 0v0m-201 1h1m198 0h1m-198 1h1m194 0h1m-194 1h1m190 0h1m-190 1v0m188 0v0m-187 1h1m184 0h1m-184 1h1m180 0h1m-180 1h1m176 0h1m-176 1h1m172 0h1m-172 1h1m168 0h1m-168 1h2m162 0h2m-163 1h1m158 0h1m-158 1h1m154 0h1m-154 1h2m148 0h2m-149 1h1m144 0h1m-144 1h2m138 0h2m-139 1h1m134 0h1m-134 1h2m128 0h2m-129 1h2m122 0h2m-123 1h2m116 0h2m-117 1h3m108 0h3m-110 1h2m102 0h2m-103 1h3m94 0h3m-96 1h4m84 0h4m-87 1h4m74 0h4m-77 1h4m64 0h4m-67 1h6m50 0h6m-55 1h10m28 0h10m-37 1h26" stroke="#ffffff"/>
<path class="ring" d="M226 53h26m-36 1h9m28 0h9m-53 1h6m48 0h6m-65 1h4m62 0h4m-75 1h4m72 0h4m-84 1h3m82 0h3m-92 1h3m90 0h3m-100 1h3m98 0h3m-107 1h2m106 0h2m-113 1h2m112 0h2m-119 1h2m118 0h2m-125 1h2m124 0h2m-131 1h2m130 0h2m-136 1h1m136 0h1m-140 1h1m140 0h1m-145 1h2m144 0h2m-150 1h1m150 0h1m-154 1h1m154 0h1m-158 1h1m158 0h1m-162 1h1m162 0h1m-166 1h1m166 0h1m-170 1h1m170 0h1m-174 1h1m174 0h1m-178 1h1m178 0h1m-182 1h1m182 0h1m-185 1v0m186 0v0m-188 1h1m188 0h1m-192 1h1m192 0h1m-195 1v0m196 0v0m-198 1h1m198 0h1m-202 1h1m202 0h1m-205 1v0m206 0v0m-208 1h1m208 0h1m-211 1v0m212 0v0m-213 1v0m214 0v0m-216 1h1m216 0h1m-219 1v0m220 0v0m-221 1v0m222 0v0m-224 1h1m224 0h1m-227 1v0m228 0v0m-229 1v0m230 0v0m-232 1h1m232 0h1m-235 1v0m236 0v0m-237 1v0m238 0v0m-239 1v0m240 0v0m-241 1v0m242 0v0m-244 1h1m244 0h1m-247 1v0m248 0v0m-249 1v0m250 0v0m-251 1v0m252 0v0m-253 1v0m254 0v0m-255 1v0m256 0v0m-257 1v0m258 0v0m-259 1v0m260 0v0m-261 1v0m262 0v0m-263 1v0m264 0v0m-265 1v0m266 0v0m-267 1v0m268 0v0m-269 1v0m270 0v0m-271 1v0m272 0v0m-273 1v0m274 0v0m-275 1v0m276 0v0m-277 1v0m278 0v0m-279 1v1m280-1v1m-281 1v0m282 0v0m-283 1v0m284 0v0m-285 1v0m286 0v0m-287 1v0m288 0v0m-289 1v1m290-1v1m-291 1v0m292 0v0m-293 1v0m294 0v0m-295 1v1m296-1v1m-297 1v0m298 0v0m-299 1v0m300 0v0m-301 1v1m302-1v1m-303 1v0m304 0v0m-305 1v0m306 0v0m-307 1v1m308-1v1m-309 1v0m310 0v0m-311 1v1m312-1v1m-313 1v1m314-1v1m-315 1v0m316 0v0m-317 1v1m318-1v1m-319 1v1m320-1v1m-321 1v0m322 0v0m-323 1v1m324-1v1m-325 1v1m326-1v1m-327 1v1m328-1v1m-329 1v1m330-1v1m-331 1v1m332-1v1m-333 1v1m334-1v1m-335 1v1m336-1v1m-337 1v1m338-1v1m-339 1v1m340-1v1m-341 1v2m342-2v2m-343 1v1m344-1v1m-345 1v1m346-1v1m-347 1v2m348-2v2m-349 1v2m350-2v2m-351 1v2m352-2v2m-353 1v2m354-2v2m-355 1v2m356-2v2m-357 1v3m358-3v3m-359 1v3m360-3v3m-361 1v3m362-3v3m-363 1v4m364-4v4m-365 1v4m366-4v4m-367 1v6m368-6v6m-369 1v9m370-9v9m-371 1v26m372-26v26m-371 1v9m370-9v9m-369 1v6m368-6v6m-367 1v4m366-4v4m-365 1v4m364-4v4m-363 1v3m362-3v3m-361 1v3m360-3v3m-359 1v3m358-3v3m-357 1v2m356-2v2m-355 1v2m354-2v2m-353 1v2m352-2v2m-351 1v2m350-2v2m-349 1v2m348-2v2m-347 1v1m346-1v1m-345 1v1m344-1v1m-343 1v2m342-2v2m-341 1v1m340-1v1m-339 1v1m338-1v1m-337 1v1m336-1v1m-335 1v1m334-1v1m-333 1v1m332-1v1m-331 1v1m330-1v1m-329 1v1m328-1v1m-327 1v1m326-1v1m-325 1v1m324-1v1m-323 1v0m322 0v0m-321 1v1m320-1v1m-319 1v1m318-1v1m-317 1v0m316 0v0m-315 1v1m314-1v1m-313 1v1m312-1v1m-311 1v0m310 0v0m-309 1v1m308-1v1m-307 1v0m306 0v0m-305 1v0m304 0v0m-303 1v1m302-1v1m-301 1v0m300 0v0m-299 1v0m298 0v0m-297 1v1m296-1v1m-295 1v0m294 0v0m-293 1v0m292 0v0m-291 1v1m290-1v1m-289 1v0m288 0v0m-287 1v0m286 0v0m-285 1v0m284 0v0m-283 1v0m282 0v0m-281 1v1m280-1v1m-279 1v0m278 0v0m-277 1v0m276 0v0m-275 1v0m274 0v0m-273 1v0m272 0v0m-271 1v0m270 0v0m-269 1v0m268 0v0m-267 1v0m266 0v0m-265 1v0m264 0v0m-263 1v0m262 0v0m-261 1v0m260 0v0m-259 1v0m258 0v0m-257 1v0m256 0v0m-255 1v0m254 0v0m-253 1v0m252 0v0m-251 1v0m250 0v0m-249 1v0m248 0v0m-247 1h1m244 0h1m-244 1v0m242 0v0m-241 1v0m240 0v0m-239 1v0m238 0v0m-237 1v0m236 0v0m-235 1h1m232 0h1m-232 1v0m230 0v0m-229 1v0m228 0v0m-227 1h1m224 0h1m-224 1v0m222 0v0m-221 1v0m220 0v0m-219 1h1m216 0h1m-216 1v0m214 0v0m-213 1v0m212 0v0m-211 1h1m208 0h1m-208 1v0m206 0v0m-205 1h1m202 0h1m-202 1h1m198 0h1m-198 1v0m196 0v0m-195 1h1m192 0h1m-192 1h1m188 0h1m-188 1v0m186 0v0m-185 1h1m182 0h1m-182 1h1m178 0h1m-178 1h1m174 0h1m-174 1h1m170 0h1m-170 1h1m166 0h1m-166 1h1m162 0h1m-162 1h1m158 0h1m-158 1h1m154 0h1m-154 1h1m150 0h1m-150 1h2m144 0h2m-145 1h1m140 0h1m-140 1h1m136 0h1m-136 1h2m130 0h2m-131 1h2m124 0h2m-125 1h2m118 0h2m-119 1h2m112 0h2m-113 1h2m106 0h2m-107 1h3m98 0h3m-100 1h3m90 0h3m-92 1h3m82 0h3m-84 1h4m72 0h4m-75 1h4m62 0h4m-65 1h6m48 0h6m-53 1h9m28 0h9m-36 1h26" stroke="#ffffff"/>
<path class="ring" d="M227 72h24m-34 1h9m26 0h9m-50 1h5m46 0h5m-62 1h5m58 0h5m-72 1h3m70 0h3m-80 1h3m78 0h3m-88 1h3m86 0h3m-95 1h2m94 0h2m-101 1h2m100 0h2m-107 1h2m106 0h2m-113 1h2m112 0h2m-118 1h1m118 0h1m-123 1h2m122 0h2m-128 1h1m128 0h1m-133 1h2m132 0h2m-138 1h1m138 0h1m-142 1h1m142 0h1m-146 1h1m146 0h1m-150 1h1m150 0h1m-154 1h1m154 0h1m-158 1h1m158 0h1m-161 1v0m162 0v0m-164 1h1m164 0h1m-168 1h1m168 0h1m-172 1h1m172 0h1m-175 1v0m176 0v0m-178 1h1m178 0h1m-181 1v0m182 0v0m-184 1h1m184 0h1m-187 1v0m188 0v0m-190 1h1m190 0h1m-193 1v0m194 0v0m-195 1v0m196 0v0m-198 1h1m198 0h1m-201 1v0m202 0v0m-203 1v0m204 0v0m-206 1h1m206 0h1m-209 1v0m210 0v0m-211 1v0m212 0v0m-213 1v0m214 0v0m-216 1h1m216 0h1m-219 1v0m220 0v0m-221 1v0m222 0v0m-223 1v0m224 0v0m-225 1v0m226 0v0m-227 1v0m228 0v0m-229 1v0m230 0v0m-231 1v0m232 0v0m-233 1v0m234 0v0m-235 1v0m236 0v0m-237 1v0m238 0v0m-239 1v0m240 0v0m-241 1v0m242 0v0m-243 1v0m244 0v0m-245 1v0m246 0v0m-247 1v0m248 0v0m-249 1v0m250 0v0m-251 1v0m252 0v0m-253 1v1m254-1v1m-255 1v0m256 0v0m-257 1v0m258 0v0m-259 1v0m260 0v0m-261 1v1m262-1v1m-263 1v0m264 0v0m-265 1v0m266 0v0m-267 1v1m268-1v1m-269 1v0m270 0v0m-271 1v0m272 0v0m-273 1v1m274-1v1m-275 1v0m276 0v0m-277 1v1m278-1v1m-279 1v0m280 0v0m-281 1v1m282-1v1m-283 1v0m284 0v0m-285 1v1m286-1v1m-287 1v1m288-1v1m-289 1v1m290-1v1m-291 1v0m292 0v0m-293 1v1m294-1v1m-295 1v1m296-1v1m-297 1v1m298-1v1m-299 1v1m300-1v1m-301 1v1m302-1v1m-303 1v1m304-1v1m-305 1v2m306-2v2m-307 1v1m308-1v1m-309 1v2m310-2v2m-311 1v1m312-1v1m-313 1v2m314-2v2m-315 1v2m316-2v2m-317 1v2m318-2v2m-319 1v2m320-2v2m-321 1v3m322-3v3m-323 1v3m324-3v3m-325 1v3m326-3v3m-327 1v5m328-5v5m-329 1v5m330-5v5m-331 1v9m332-9v9m-333 1v24m334-24v24m-333 1v9m332-9v9m-331 1v5m330-5v5m-329 1v5m328-5v5m-327 1v3m326-3v3m-325 1v3m324-3v3m-323 1v3m322-3v3m-321 1v2m320-2v2m-319 1v2m318-2v2m-317 1v2m316-2v2m-315 1v2m314-2v2m-313 1v1m312-1v1m-311 1v2m310-2v2m-309 1v1m308-1v1m-307 1v2m306-2v2m-305 1v1m304-1v1m-303 1v1m302-1v1m-301 1v1m300-1v1m-299 1v1m298-1v1m-297 1v1m296-1v1m-295 1v1m294-1v1m-293 1v0m292 0v0m-291 1v1m290-1v1m-289 1v1m288-1v1m-287 1v1m286-1v1m-285 1v0m284 0v0m-283 1v1m282-1v1m-281 1v0m280 0v0m-279 1v1m278-1v1m-277 1v0m276 0v0m-275 1v1m274-1v1m-273 1v0m272 0v0m-271 1v0m270 0v0m-269 1v1m268-1v1m-267 1v0m266 0v0m-265 1v0m264 0v0m-263 1v1m262-1v1m-261 1v0m260 0v0m-259 1v0m258 0v0m-257 1v0m256 0v0m-255 1v1m254-1v1m-253 1v0m252 0v0m-251 1v0m250 0v0m-249 1v0m248 0v0m-247 1v0m246 0v0m-245 1v0m244 0v0m-243 1v0m242 0v0m-241 1v0m240 0v0m-239 1v0m238 0v0m-237 1v0m236 0v0m-235 1v0m234 0v0m-233 1v0m232 0v0m-231 1v0m230 0v0m-229 1v0m228 0v0m-227 1v0m226 0v0m-225 1v0m224 0v0m-223 1v0m222 0v0m-221 1v0m220 0v0m-219 1h1m216 0h1m-216 1v0m214 0v0m-213 1v0m212 0v0m-211 1v0m210 0v0m-209 1h1m206 0h1m-206 1v0m204 0v0m-203 1v0m202 0v0m-201 1h1m198 0h1m-198 1v0m196 0v0m-195 1v0m194 0v0m-193 1h1m190 0h1m-190 1v0m188 0v0m-187 1h1m184 0h1m-184 1v0m182 0v0m-181 1h1m178 0h1m-178 1v0m176 0v0m-175 1h1m172 0h1m-172 1h1m168 0h1m-168 1h1m164 0h1m-164 1v0m162 0v0m-161 1h1m158 0h1m-158 1h1m154 0h1m-154 1h1m150 0h1m-150 1h1m146 0h1m-146 1h1m142 0h1m-142 1h1m138 0h1m-138 1h2m132 0h2m-133 1h1m128 0h1m-128 1h2m122 0h2m-123 1h1m118 0h1m-118 1h2m112 0h2m-113 1h2m106 0h2m-107 1h2m100 0h2m-101 1h2m94 0h2m-95 1h3m86 0h3m-88 1h3m78 0h3m-80 1h3m70 0h3m-72 1h5m58 0h5m-62 1h5m46 0h5m-50 1h9m26 0h9m-34 1h24" stroke="#ffffff"/>
<path class="signlines" d="M194 16v2m1 1v4m1 1v4m115-4v1m-1 1v2m-113 1v5m112-5v2m-1 1v2m-110 1v4m109-4v2m-1 1v1m-107 1v4m106-4v2m-1 1v2m-104 0v2m103-1v2m-1 1v2m-1 1v1m-212 16v0m1 1v0m1 1v0m1 1v1m1 1v0m1 1v0m1 1v0m1 1v0m1 1v0m1 1v0m1 1v1m1 1v0m1 1v0m1 1v0m1 1v0m1 1v0m1 1v0m1 1v1m303 0v0m-302 1v0m301 0v0m-300 1v0m299 0v0m-298 1v0m296 0h1m-2 1v0m-1 1v0m-1 1v0m-1 1v0m-1 1v0m-1 1v0m-2 1h1m-2 1v0m-1 1v0m-1 1v0m-1 1v0m-1 1v0m-1 1v0m-2 1h1m-2 1v0m-1 1v0m-1 1v0m-362 58h1m1 1h2m1 1h2m1 1h2m1 1h2m1 1h1m1 1h2m1 1h2m1 1h2m1 1h2m1 1h1m407 17h2m-7 1h4m-9 1h4m-10 1h5m-10 1h4m-9 1h4m-7 1h2m-388 78h2m-7 1h4m-9 1h4m-10 1h5m-10 1h4m-9 1h4m-7 1h2m407 17h1m1 1h2m1 1h2m1 1h2m1 1h2m1 1h1m1 1h2m1 1h2m1 1h2m1 1h2m1 1h1m-362 58v0m-1 1v0m-1 1v0m-2 1h1m-2 1v0m-1 1v0m-1 1v0m-1 1v0m-1 1v0m-1 1v0m-2 1h1m-2 1v0m-1 1v0m-1 1v0m-1 1v0m-1 1v0m-1 1v0m-2 1h1m296 0v0m-298 1v0m299 0v0m-300 1v0m301 0v0m-302 1v0m303 0v1m1 1v0m1 1v0m1 1v0m1 1v0m1 1v0m1 1v0m1 1v1m1 1v0m1 1v0m1 1v0m1 1v0m1 1v0m1 1v0m1 1v1m1 1v0m1 1v0m1 1v0m-212 16v1m-1 1v2m-1 1v2m103-1v2m-104 0v2m105-1v4m-106-2v2m-1 1v1m108-1v4m-109-2v2m-1 1v2m111-2v5m-112-2v2m-1 1v2m114-2v4m-115-1v1m116 1v4m1 1v2" stroke="#ffffff"/>
<path class="cusplines" d="M264 54v3m-1 1v5m-1 1v5m-95-2v1m1 1v1m93 0v3m-92-2v2m1 1v2m1 1v1m1 1v2m1 1v1m1 1v1m-70 25v0m1 1v0m1 1v0m1 1v0m1 1v0m269 0v0m-268 1v0m267 0v0m-266 1h1m264 0v0m-263 1v0m261 0h1m-261 1v0m259 0v0m-258 1v0m257 0v0m-256 1v0m255 0v0m-254 1v0m253 0v0m-252 1v0m251 0v0m-250 1v0m248 0h1m-2 1v0m-1 1v0m-1 1v0m-296 41h1m1 1h1m1 1h1m1 1h1m1 1h2m1 1h1m1 1h1m1 1h1m1 1h1m-32 64h19m334 0h19m-32 64h1m1 1h1m1 1h1m1 1h1m1 1h2m1 1h1m1 1h1m1 1h1m1 1h1m-296 41v0m-1 1v0m-1 1v0m-2 1h1m248 0v0m-250 1v0m251 0v0m-252 1v0m253 0v0m-254 1v0m255 0v0m-256 1v0m257 0v0m-258 1v0m259 0v0m-261 1h1m261 0v0m-263 1v0m264 0h1m-266 1v0m267 0v0m-268 1v0m269 0v0m1 1v0m1 1v0m1 1v0m1 1v0m-70 25v1m1 1v1m1 1v2m1 1v1m1 1v2m-91 1v3m92-3v2m1 1v1m-94 0v5m95-4v1m-96 4v5m-1 1v3" stroke="#ffffff"/>
<path class="houselines" d="M261 73v0m0 2v0m-1 2v0m0 2v0m0 2v0m0 2v0m-1 2v0m0 2v0m0 2v0m0 2v0m-1 2v0m0 2v0m0 2v0m0 2v0m-1 2v0m0 2v0m0 2v0m-1 2v0m0 2v0m0 2v0m0 2v0m-1 2v0m0 2v0m0 2v0m0 2v0m-1 2v0m-135 1v0m135 1v0m-133 1v0m242 0v0m-109 1v0m-131 1v0m238 0v0m-107 1v0m-129 1v0m234 0v0m-106 1v0m104 0v0m-230 1v0m126 1v0m102 0v0m-226 1v0m2 1v0m122 0v0m100 0v0m-220 2v0m120 0v0m98 0v0m-216 2v0m117 0v0m97 0v0m-212 2v0m115 0v0m95 0v0m-2 1v0m-206 1v0m113 0v0m91 1v0m-202 1v0m110 0v0m90 1v0m-198 1v0m108 0v0m88 1v0m-194 1v0m106 0v0m86 1v0m-190 1v0m104 0v0m84 1v0m-186 1v0m101 0v0m83 0v0m-182 2v0m99 0v0m81 0v0m-178 2v0m97 0v0m79 0v0m-174 1v0m95 1v0m77 0v0m-170 1v0m92 1v0m76 0v0m-166 1v0m164 0v0m-74 1v0m-88 1v0m160 0v0m-72 1v0m-86 1v0m156 0v0m-70 1v0m-84 1v0m152 0v0m-69 1v0m-81 1v0m148 0v0m-67 1v0m-79 1v0m144 0v0m-65 1v0m63 0v0m-140 1v0m-86 1v0m162 0v0m62 0v0m-222 1v0m86 0v0m-84 1v0m2 0v0m156 0v0m60 0v0m-214 1v0m82 0v0m-80 1v0m152 0v0m58 0v0m-208 1v0m80 0v0m-78 1v0m80 0v0m68 0v0m56 0v0m-202 1v0m2 0v0m2 1v0m76 0v0m65 0v0m55 0v0m-194 1v0m192 0v0m-190 1v0m74 0v0m63 0v0m-135 1v0m186 0v0m-184 1v0m2 0v0m70 0v0m61 0v0m-129 1v0m178 0v0m-176 1v0m68 0v0m59 0v0m-125 1v0m172 0v0m-170 1v0m66 0v0m56 0v0m-120 1v0m2 0v0m164 0v0m-162 1v0m62 0v0m54 0v0m44 0v0m-158 1v0m2 1v0m60 0v0m52 0v0m42 0v0m-152 1v0m2 1v0m2 0v0m56 0v0m50 0v0m40 0v0m-144 1v0m2 1v0m54 0v0m47 0v0m39 0v0m-138 1v0m2 1v0m52 0v0m45 0v0m37 0v0m-132 1v0m2 0v0m2 1v0m48 0v0m43 0v0m35 0v0m-124 1v0m48 0v0m74 0v0m-120 1v0m87 0v0m-85 1v0m46 0v0m70 0v0m-114 1v0m2 0v0m80 0v0m-78 1v0m42 0v0m66 0v0m-106 1v0m76 0v0m-74 1v0m40 0v0m62 0v0m-100 1v0m72 0v0m-70 1v0m2 0v0m36 0v0m58 0v0m-92 1v0m65 0v0m25 0v0m-88 1v0m34 0v0m-32 1v0m61 0v0m23 0v0m-82 1v0m32 0v0m-30 1v0m2 0v0m55 0v0m21 0v0m-74 1v0m28 0v0m-26 1v0m51 0v0m19 0v0m-68 1v0m26 0v0m-24 1v0m46 0v0m18 0v0m-62 1v0m2 0v0m22 0v0m-20 1v0m40 0v0m16 0v0m-54 1v0m20 0v0m32 0v0m-50 1v0m36 0v0m-34 1v0m18 0v0m28 0v0m-44 1v0m2 0v0m16 0v0m14 0v0m-28 1v0m38 0v0m-36 1v0m14 0v0m11 0v0m-23 1v0m32 0v0m-30 1v0m12 0v0m9 0v0m-19 1v0m2 0v0m24 0v0m-22 1v0m8 0v0m7 0v0m-13 1v0m18 0v0m-16 1v0m6 0v0m5 0v0m3 0v0m-12 1v0m2 1v0m2 0v0m2 0v1m2-1v0m2 0v0m-2 2v0m2 1v1m-4 0v0m2 0v0m4 0v0m2 0v0m2 1v0m-12 1v0m3 0v0m5 0v0m6 0v0m-16 1v0m18 0v0m-13 1v0m7 0v0m8 0v0m-22 1v0m24 0v0m2 0v0m-19 1v0m9 0v0m12 0v0m-30 1v0m32 0v0m-23 1v0m11 0v0m14 0v0m-36 1v0m38 0v0m-28 1v0m14 0v0m16 0v0m2 0v0m-44 1v0m28 0v0m18 0v0m-34 1v0m36 0v0m-50 1v0m32 0v0m20 0v0m-54 1v0m16 0v0m40 0v0m-20 1v0m22 0v0m2 0v0m-62 1v0m18 0v0m46 0v0m-24 1v0m26 0v0m-68 1v0m19 0v0m51 0v0m-26 1v0m28 0v0m-74 1v0m21 0v0m55 0v0m2 0v0m-30 1v0m32 0v0m-82 1v0m23 0v0m61 0v0m-32 1v0m34 0v0m-88 1v0m25 0v0m65 0v0m-92 1v0m58 0v0m36 0v0m2 0v0m-70 1v0m72 0v0m-100 1v0m62 0v0m40 0v0m-74 1v0m76 0v0m-106 1v0m66 0v0m42 0v0m-78 1v0m80 0v0m2 0v0m-114 1v0m70 0v0m46 0v0m-85 1v0m87 0v0m-120 1v0m74 0v0m48 0v0m-124 1v0m35 0v0m43 0v0m48 0v0m2 1v0m2 0v0m-132 1v0m37 0v0m45 0v0m52 0v0m2 1v0m-138 1v0m39 0v0m47 0v0m54 0v0m2 1v0m-144 1v0m40 0v0m50 0v0m56 0v0m2 0v0m2 1v0m-152 1v0m42 0v0m52 0v0m60 0v0m2 1v0m-158 1v0m44 0v0m54 0v0m62 0v0m-162 1v0m164 0v0m2 0v0m-120 1v0m56 0v0m66 0v0m-170 1v0m172 0v0m-125 1v0m59 0v0m68 0v0m-176 1v0m178 0v0m-129 1v0m61 0v0m70 0v0m2 0v0m-184 1v0m186 0v0m-135 1v0m63 0v0m74 0v0m-190 1v0m192 0v0m-194 1v0m55 0v0m65 0v0m76 0v0m2 1v0m2 0v0m-202 1v0m56 0v0m68 0v0m80 0v0m-78 1v0m80 0v0m-208 1v0m58 0v0m152 0v0m-80 1v0m82 0v0m-214 1v0m60 0v0m156 0v0m2 0v0m-84 1v0m86 0v0m-222 1v0m62 0v0m162 0v0m-86 1v0m-140 1v0m63 0v0m-65 1v0m144 0v0m-79 1v0m-67 1v0m148 0v0m-81 1v0m-69 1v0m152 0v0m-84 1v0m-70 1v0m156 0v0m-86 1v0m-72 1v0m160 0v0m-88 1v0m-74 1v0m164 0v0m-166 1v0m76 0v0m92 1v0m-170 1v0m77 0v0m95 1v0m-174 1v0m79 0v0m97 0v0m-178 2v0m81 0v0m99 0v0m-182 2v0m83 0v0m101 0v0m-186 1v0m84 1v0m104 0v0m-190 1v0m86 1v0m106 0v0m-194 1v0m88 1v0m108 0v0m-198 1v0m90 1v0m110 0v0m-202 1v0m91 1v0m113 0v0m-206 1v0m-2 1v0m95 0v0m115 0v0m-212 2v0m97 0v0m117 0v0m-216 2v0m98 0v0m120 0v0m-220 2v0m100 0v0m122 0v0m2 1v0m-226 1v0m102 0v0m126 1v0m-230 1v0m104 0v0m-106 1v0m234 0v0m-129 1v0m-107 1v0m238 0v0m-131 1v0m-109 1v0m242 0v0m-133 1v0m135 1v0m-135 1v0m-1 2v0m0 2v0m0 2v0m0 2v0m-1 2v0m0 2v0m0 2v0m0 2v0m-1 2v0m0 2v0m0 2v0m-1 2v0m0 2v0m0 2v0m0 2v0m-1 2v0m0 2v0m0 2v0m0 2v0m-1 2v0m0 2v0m0 2v0m0 2v0m-1 2v0m0 2v0" stroke="#808080"/>
<path class="sign" d="M220 443h2m8 0h2m-13 1v0m4 0v0m6 0v0m4 0v0m-15 1v2m6-2v4m4-4v4m6-4v2m-15 1v0m14 0v0m-13 1v0m12 0v0m-7 1v0m2 0v0m-1 1v8" stroke="#ff0000"/>
<path class="ruler" d="M200 443h2m-1 1h1m-2 1v0m2 0v0m-6 1h1m2 0v0m-4 1v0m3 0v0m-4 1v1m5-1v1m-4 1v0m3 0v0m-2 1h1" stroke="#ff0000"/>
<path class="sign" d="M327 421v1m12-1v1m-11 1v1m10-1v1m-9 1v0m2 0h4m2 0v0m-7 1v0m6 0v0m-7 1v0m8 0v0m-9 1v0m10 0v0m-11 1v4m12-4v4m-11 1v0m10 0v0m-9 1v0m8 0v0m-7 1v0m6 0v0m-5 1h4" stroke="#ffff00"/>
<path class="ruler" d="M307 436h2m-3 1v2m4-2v2m-3 1h2m-1 1v0m-2 1h4m-2 1v1" stroke="#ffff00"/>
<path class="sign" d="M410 348v0m14 0v0m-13 1v0m12 0v0m-11 1h10m-8 1v10m6-10v10m-8 1h10m-11 1v0m12 0v0m-13 1v0m14 0v0" stroke="#00ff00"/>
<path class="ruler" d="M397 375v0m4 0v0m-3 1h2m-3 1v2m4-2v2m-3 1h2m-1 1v0m-2 1h4m-2 1v0" stroke="#00ff00"/>
<path class="sign" d="M449 246h4m-5 1v0m6 0v0m-9 1h2m8 0h2m-13 1v0m10 0v0m4 0v0m-15 1v0m10 0v2m6-2v2m-14 0h2m-3 1v0m4 0v0m6 0v0m4 0v0m-15 1v2m6-2v2m6-2h2m2 2v0m-15 1v0m4 0v0m10 0v0m-13 1h2m8 0h2m-9 1v0m6 0v0m-5 1h4" stroke="#0000ff"/>
<path class="ruler" d="M445 276h2m-3 1v0m4 0h1m-4 1v0m4 0v0m-3 1v2m4-2v2m-5 1v0m4 0v0m-5 1v0m4 0h1m-4 1h2" stroke="#0000ff"/>
<path class="sign" d="M427 137h4m-5 1v0m6 0v0m-7 1v0m8 0v0m-9 1v0m10 0v0m-11 1v4m12-4v4m-11 1v0m10 0v0m-9 1v2m8-2v2m-12 0v0m1 1v0m2 0v0m10 0v0m-11 1v0m12 0v0m1 1v0m1 1v0" stroke="#ff0000"/>
<path class="ruler" d="M439 166h2m-4 1h1m4 0h1m-6 1v0m6 0v0m-7 1v2m8-2v2m-4-1v0m-3 2v0m6 0v0m-6 1h1m4 0h1m-4 1h2" stroke="#ff0000"/>
<path class="sign" d="M348 54v0m4 0v0m4 0v0m-7 1v0m2 0v0m2 0v0m2 0v0m2 0v0m-7 1v12m4-12v12m4-12v2m4-2v0m-1 1h1m-2 1v0m2 0v8m-4-7h1m-1 1v6m1 1v0m2 0v0m-1 1v0m-1 1v0m2 0v0m-3 1v0m4 0v0" stroke="#ffff00"/>
<path class="ruler" d="M377 75v0m4 0v0m-3 1h2m-3 1v2m4-2v2m-3 1h2m-1 1v0m-2 1h4m-2 1v0" stroke="#00ff00"/>
<path class="sign" d="M250 23h4m-5 1v0m6 0v0m-7 1v2m8-2v2m-7 1v0m6 0v0m-11 1h6m4 0h6m-16 4h16" stroke="#00ff00"/>
<path class="ruler" d="M279 27h2m-3 1v2m4-2v2m-3 1h2m-1 1v0m-2 1h4m-2 1v1" stroke="#ffff00"/>
<path class="sign" d="M137 41v0m4 0v0m4 0v0m-7 1v0m2 0v0m2 0v0m2 0v0m2 0v0m-7 1v12m4-12v12m4-12v12m4-4v0m-1 1h2m-3 1v0m2 0v2m2-2v0m-5 3v0m2 0v0m-1 1v0" stroke="#0000ff"/>
<path class="ruler" d="M167 34v2m3-2v0m3 0v2m-4-1v0m2 0v0m-1 1v0m-2 1v0m4 0v0m-3 1h2m-1 1v0m-2 1h4m-2 1v1" stroke="#0000ff"/>
<path class="sign" d="M66 114h4m-1 1h1m-2 1v0m2 0v2m-3-1v0m-1 1v0m-1 1v0m-9 1v0m8 0v0m-7 1v0m6 0v0m-5 1v0m4 0v0m-3 1v0m2 0v0m-1 1v0m-1 1v0m2 0v0m-3 1v0m4 0v0m-5 1v0m6 0v0m-7 1v0m8 0v0m-9 1v0m-1 1v0" stroke="#ff0000"/>
<path class="ruler" d="M82 95v0m-6 1h1m4 0v5m-3-4v1m-1 1v1m-1 1v0m0 1h7m-2 1v0" stroke="#ff0000"/>
<path class="sign" d="M21 218v0m6 0v0m4 0h2m-13 1h1m6 0h1m2 0v0m4 0v0m-15 1v0m2 0v6m6-6v0m2 0v0m6 0v2m-9-1v0m4 0v0m-5 1v4m6-4v0m1 1v0m2 0v0m-1 1v0m1 1v0m1 1v6m-13-5v0m2 0v0m-1 1v4m11 1v0m-1 1v0" stroke="#ffff00"/>
<path class="ruler" d="M30 194v0m-2 1h4m-2 1v1m2 0h1m-3 1h1m3 0v1m-4 0v2m3-1v1m1 1v0" stroke="#ffff00"/>
<path class="sign" d="M45 325v0m6 0v0m6 0v0m-13 1h1m5 0h1m5 0v1m-12 0v0m2 0v2m4-2v0m2 0v2m-9-1v0m6 0v0m6 0v0m-13 1v1m6-1v0m6 0v0m-7 1h1m5 0h1m-13 1v0m6 0v0m6 0v0m-8 4v0m6 0v0m6 0v0m-13 1h1m5 0h1m5 0v1m-12 0v0m2 0v2m4-2v0m2 0v2m-9-1v0m6 0v0m6 0v0m-13 1v1m6-1v0m6 0v0m-7 1h1m5 0h1m-13 1v0m6 0v0m6 0v0" stroke="#00ff00"/>
<path class="ruler" d="M35 304v0m6 0v0m-5 1v1m4-1v1m-2 0v0m-2 1h4m-4 1v0m2 0v1m2-1v0m-5 1v0m6 0v0m-4 1h2m-2 1v0m2 0v0m-1 1v0" stroke="#00ff00"/>
<path class="sign" d="M114 408v0m16 0v0m-15 1v0m14 0v0m-13 1v0m12 0v0m-11 1v0m10 0v0m-9 1v3m8-3v3m-12 1h16m-12 1v3m8-3v3m-9 1v0m10 0v0m-11 1v0m12 0v0m-13 1v0m14 0v0m-15 1v0m16 0v0" stroke="#0000ff"/>
<path class="ruler" d="M96 395v0m3 0v0m3 0v0m-7 1h1m2 0h2m2 0h1m-7 1v0m3 0v1m3-1v0m-5 1v0m4 0v0m-3 1h2m-1 1v0m-2 1h4m-2 1v1" stroke="#0000ff"/>
<path class="ruler" d="M67 268h2m-1 1h1m-2 1v0m2 0v0m-6 1h1m2 0v0m-4 1v0m3 0v0m-4 1v1m5-1v1m-4 1v0m3 0v0m-2 1h1" stroke="#ff0000"/>
<path class="ruler" d="M130 375h2m-3 1v2m4-2v2m-3 1h2m-1 1v0m-2 1h4m-2 1v1" stroke="#ffff00"/>
<path class="ruler" d="M237 412v0m4 0v0m-3 1h2m-3 1v2m4-2v2m-3 1h2m-1 1v0m-2 1h4m-2 1v0" stroke="#00ff00"/>
<path class="ruler" d="M322 391h2m-3 1v0m4 0h1m-4 1v0m4 0v0m-3 1v2m4-2v2m-5 1v0m4 0v0m-5 1v0m4 0h1m-4 1h2" stroke="#0000ff"/>
<path class="ruler" d="M377 345h2m-4 1h1m4 0h1m-6 1v0m6 0v0m-7 1v2m8-2v2m-4-1v0m-3 2v0m6 0v0m-6 1h1m4 0h1m-4 1h2" stroke="#ff0000"/>
<path class="ruler" d="M407 287v0m4 0v0m-3 1h2m-3 1v2m4-2v2m-3 1h2m-1 1v0m-2 1h4m-2 1v0" stroke="#00ff00"/>
<path class="ruler" d="M412 202h2m-3 1v2m4-2v2m-3 1h2m-1 1v0m-2 1h4m-2 1v1" stroke="#ffff00"/>
<path class="ruler" d="M344 95v2m3-2v0m3 0v2m-4-1v0m2 0v0m-1 1v0m-2 1v0m4 0v0m-3 1h2m-1 1v0m-2 1h4m-2 1v1" stroke="#0000ff"/>
<path class="ruler" d="M242 58v0m-6 1h1m4 0v5m-3-4v1m-1 1v1m-1 1v0m0 1h7m-2 1v0" stroke="#ff0000"/>
<path class="ruler" d="M153 79v0m-2 1h4m-2 1v1m2 0h1m-3 1h1m3 0v1m-4 0v2m3-1v1m1 1v0" stroke="#ffff00"/>
<path class="ruler" d="M97 125v0m6 0v0m-5 1v1m4-1v1m-2 0v0m-2 1h4m-4 1v0m2 0v1m2-1v0m-5 1v0m6 0v0m-4 1h2m-2 1v0m2 0v0m-1 1v0" stroke="#00ff00"/>
<path class="ruler" d="M66 183v0m3 0v0m3 0v0m-7 1h1m2 0h2m2 0h1m-7 1v0m3 0v1m3-1v0m-5 1v0m4 0v0m-3 1h2m-1 1v0m-2 1h4m-2 1v1" stroke="#0000ff"/>
<path d="M104 276h1m-4 1h2m-4 1h1" stroke="#ffffff"/>
<path class="planet" d="M83 273v4m5-4h2m5 0v3m-8-2v2m4-2v2m-3 1h2m4 0v2m-10-1v1m1 1h1m6 0h1m-6 1h4m-2 1v2m-4 1h8m-4 1v3" stroke="#0000ff"/>
<path d="M140 266v0m-1 1h2m-1 1v0m-30 6v0m-1 1h2m-1 1v0" stroke="#0000ff"/>
<path d="M135 268v0m-4 1v0m2 0v0m-6 1v0m2 0v0m-4 1v0m-4 1v0m2 0v0m-6 1v0m2 0v0m-4 1v0" stroke="#ffffff"/>
<path d="M196 371v1m1 1v2m1 1v1m1 1v1" stroke="#ffffff"/>
<path class="planet" d="M191 381v1m6-1v1m6-1v1m-14 1h4m2 0h4m2 0h4m-14 1v1m6-1v4m6-4v1m-11 1v1m10-1v1m-9 1h1m6 0h1m-6 1h4m-2 1v2m-4 1h8m-4 1v3" stroke="#0000ff"/>
<path d="M207 336v0m-1 1h2m-1 1v0m-9 27v0m-1 1h2m-1 1v0" stroke="#0000ff"/>
<path d="M206 341v0m-1 2v0m0 2v0m-1 2v0m-1 2v0m0 2v0m-1 2v0m-1 2v0m0 2v0m-1 2v0m-1 2v0" stroke="#ffffff"/>
<path d="M326 347v0m1 1v0m1 1v0m1 1v0m1 1v0m1 1v0" stroke="#ffffff"/>
<path class="planet" d="M331 352v0m12 0v0m-11 1v1m10-1v1m-9 1v2m8-2v2m-4-1v1m-4 1h8m-8 1v0m4 0v4m4-4v0m-9 1v1m10-1v1m-11 1v0m12 0v0m-7 2h2m-3 1v2m4-2v2m-3 1h2" stroke="#00ff00"/>
<path d="M304 318v0m-1 1h2m-1 1v0m19 22v0m-1 1h2m-1 1v0" stroke="#00ff00"/>
<path d="M307 323v0m2 2v0m1 2v0m2 2v0m1 2v0m2 2v0m2 2v0m1 2v0m2 2v0" stroke="#ffffff"/>
<path d="M193 370h2m-7 1h4m-8 1h3m-6 1h2" stroke="#ffffff"/>
<path class="planet" d="M176 374v1m-4 1h8m-4 1v4m4-1h2m-3 1v0m4 0v0m-7 1h2m6 0v2m-8-1v5m7-3v0m-1 1v2m1 1v0m1 1v0" stroke="#ffff00"/>
<path d="M206 335v0m-1 1h2m-1 1v0m-10 28v0m-1 1h2m-1 1v0" stroke="#ffff00"/>
<path d="M205 341v0m-1 2v0m0 2v0m-1 2v0m-1 2v0m0 2v0m-1 2v0m-1 2v0m-1 2v0m0 2v0m-1 2v0" stroke="#ffffff"/>
<path d="M377 245h8" stroke="#808080"/>
<path class="planet" d="M400 238v0m-1 1v0m-11 1h2m8 0v11m-7-10v0m1 1v2m-1 1v0m-1 1v2m-1 1v0m-1 1v1m0 1h14m-4 1v1" stroke="#ff0000"/>
<path d="M342 243v0m-1 1h2m30 0v0m-31 1v0m30 0h2m-1 1v0" stroke="#ff0000"/>
<path d="M346 244v0m2 0v0m2 0v0m2 0v0m2 0v0m2 0v0m2 1v0m2 0v0m2 0v0m2 0v0m2 0v0m2 0v0" stroke="#808080"/>
<path d="M117 306h1m-3 1h1m-3 1h1m-3 1h1" stroke="#ffffff"/>
<path class="planet" d="M107 306h4m-1 1h1m-2 1v0m2 0v2m-3-1v0m-1 1v0m-1 1v0m-8 1h4m3 0v0m-8 1v0m6 0h1m-8 1v0m8 0v0m-9 1v4m10-4v4m-9 1v0m8 0v0m-7 1v0m6 0v0m-5 1h4" stroke="#ff0000"/>
<path d="M149 287v0m-1 1h2m-1 1v0m-27 13v0m-1 1h2m-1 1v0" stroke="#ff0000"/>
<path d="M145 291v0m-2 1v0m-2 1v0m-2 1v0m-2 1v0m-2 1v0m-2 1v0m-2 1v0m-2 1v0m-2 1v0" stroke="#ffffff"/>
<path d="M144 340v0m-1 1v0m-1 1v0m-1 1v0m-1 1v0m-1 1v0" stroke="#ffffff"/>
<path class="planet" d="M131 344h2m-4 1h1m4 0h1m-6 1v0m6 0v0m-7 1v2m8-2v2m-7 1v0m6 0v0m-6 1h1m4 0h1m-4 1h2m-1 1v2m-4 1h8m-4 1v3" stroke="#ffff00"/>
<path d="M168 313v0m-1 1h2m-1 1v0m-21 20v0m-1 1h2m-1 1v0" stroke="#ffff00"/>
<path d="M165 317v0m-2 2v0m-2 2v0m-2 2v0m-1 2v0m-2 2v0m-2 2v0m-2 2v0m-2 2v0" stroke="#ffffff"/>
<path d="M158 351v0m-1 1v1m-1 1v0m-1 1v1m-1 1v0" stroke="#ffffff"/>
<path class="planet" d="M144 357v0m8 0v0m-7 1v0m6 0v0m-5 1h4m-5 1h1m4 0h1m-6 1v0m6 0v0m-7 1v2m8-2v2m-7 1v0m6 0v0m-6 1h1m4 0h1m-4 1h2m-1 1v2m-4 1h8m-4 1v1" stroke="#00ff00"/>
<path d="M179 321v0m-1 1h2m-1 1v0m-19 23v0m-1 1h2m-1 1v0" stroke="#00ff00"/>
<path d="M176 326v0m-2 2v0m-1 2v0m-2 2v0m-1 2v0m-2 2v0m-1 2v0m-2 2v0m-1 2v0" stroke="#ffffff"/>
<path d="M93 245h8" stroke="#ffffff"/>
<path class="planet" d="M80 238h6m-7 1v0m7 0h1m-9 1h1m9 0v0m-9 1v0m9 0h1m-9 1h1m8 0v0m-8 1v0m9 0v6m-9-5h1m0 1v2m-1 1h1m-1 1v0m-1 1h1m8 0v0m-10 1v0m9 0h1m-11 1h1m9 0v0m-9 1v0m7 0h1m-7 1h6" stroke="#0000ff"/>
<path d="M136 242v0m-1 1h2m-32 1v0m31 0v0m-32 1h2m-1 1v0" stroke="#0000ff"/>
<path d="M122 244v0m2 0v0m2 0v0m2 0v0m2 0v0m2 0v0m-22 1v0m2 0v0m2 0v0m2 0v0m2 0v0m2 0v0" stroke="#ffffff"/>
<path d="M129 323v0m-2 1h1m-2 1v0m-2 1h1m-2 1v0" stroke="#ffffff"/>
<path class="planet" d="M113 325h4m-6 1h1m6 0h1m-9 1v0m10 0v0m-11 1v0m12 0v0m-13 1v1m14-1v1m-15 1v4m16-4v4m-8-2v0m-7 3v1m14-1v1m-13 1v0m12 0v0m-11 1v0m10 0v0m-9 1h1m6 0h1m-6 1h4" stroke="#ff0000"/>
<path d="M157 300v0m-1 1h2m-1 1v0m-25 17v0m-1 1h2m-1 1v0" stroke="#ff0000"/>
<path d="M153 304v0m-2 2v0m-2 1v0m-2 2v0m-2 1v0m-2 2v0m-2 1v0m-2 2v0m-2 1v0" stroke="#ffffff"/>
<path d="M134 268h1m-5 1h3m-5 1h1" stroke="#ffffff"/>
<path class="planet" d="M113 264v4m5-4h2m5 0v3m-8-2v2m4-2v2m-3 1h2m4 0v1m-10 0v0m0 1h1m8 0h1m-8 1v0m6 0v0m-5 1h4m-2 1v2m-4 1h8m-4 1v3" stroke="#0000ff"/>
<path d="M140 266v0m-1 1h2m-1 1v0" stroke="#0000ff"/>
<path d="M206 341v2m1 1v3m1 1v2" stroke="#ffffff"/>
<path class="planet" d="M200 351v1m6-1v1m6-1v1m-14 1h4m2 0h4m2 0h4m-14 1v1m6-1v4m6-4v1m-11 1v1m10-1v1m-9 1h1m6 0h1m-6 1h4m-2 1v2m-4 1h8m-4 1v3" stroke="#0000ff"/>
<path d="M207 336v0m-1 1h2m-1 1v0" stroke="#0000ff"/>
<path d="M307 323v0m1 1v0m1 1v1m1 1v0m1 1v0" stroke="#ffffff"/>
<path class="planet" d="M311 328v0m12 0v0m-11 1v1m10-1v1m-9 1v2m8-2v2m-4-1v1m-4 1h8m-8 1v0m4 0v4m4-4v0m-9 1v1m10-1v1m-11 1v0m12 0v0m-7 2h2m-3 1v2m4-2v2m-3 1h2" stroke="#00ff00"/>
<path d="M304 318v0m-1 1h2m-1 1v0" stroke="#00ff00"/>
<path d="M203 341h2m-6 1h3m-7 1h3m-5 1h1" stroke="#ffffff"/>
<path class="planet" d="M187 345v1m-4 1h8m-4 1v4m4-1h2m-3 1v0m4 0v0m-7 1h2m6 0v2m-8-1v5m7-3v0m-1 1v2m1 1v0m1 1v0" stroke="#ffff00"/>
<path d="M206 335v0m-1 1h2m-1 1v0" stroke="#ffff00"/>
<path d="M346 244h8" stroke="#ffffff"/>
<path class="planet" d="M369 236v0m-1 1v0m-11 1h2m8 0v11m-7-10v0m1 1v2m-1 1v0m-1 1v2m-1 1v0m-1 1v1m0 1h14m-4 1v1" stroke="#ff0000"/>
<path d="M342 243v0m-1 1h2m-1 1v0" stroke="#ff0000"/>
<path d="M144 291h1m-3 1h1m-3 1h1m-3 1h1" stroke="#ffffff"/>
<path class="planet" d="M134 291h4m-1 1h1m-2 1v0m2 0v2m-3-1v0m-1 1v0m-1 1v0m-8 1h4m3 0v0m-8 1v0m6 0h1m-8 1v0m8 0v0m-9 1v4m10-4v4m-9 1v0m8 0v0m-7 1v0m6 0v0m-5 1h4" stroke="#ff0000"/>
<path d="M149 287v0m-1 1h2m-1 1v0" stroke="#ff0000"/>
<path d="M165 317v0m-1 1v0m-1 1v0m-1 1v0m-1 1v0m-1 1v0" stroke="#ffffff"/>
<path class="planet" d="M152 321h2m-4 1h1m4 0h1m-6 1v0m6 0v0m-7 1v2m8-2v2m-7 1v0m6 0v0m-6 1h1m4 0h1m-4 1h2m-1 1v2m-4 1h8m-4 1v3" stroke="#ffff00"/>
<path d="M168 313v0m-1 1h2m-1 1v0" stroke="#ffff00"/>
<path d="M176 326v0m-1 1v1m-1 1v0m-1 1v1m-1 1v0" stroke="#ffffff"/>
<path class="planet" d="M163 332v0m8 0v0m-7 1v0m6 0v0m-5 1h4m-5 1h1m4 0h1m-6 1v0m6 0v0m-7 1v2m8-2v2m-7 1v0m6 0v0m-6 1h1m4 0h1m-4 1h2m-1 1v2m-4 1h8m-4 1v1" stroke="#00ff00"/>
<path d="M179 321v0m-1 1h2m-1 1v0" stroke="#00ff00"/>
<path d="M124 244h8" stroke="#ffffff"/>
<path class="planet" d="M111 236h6m-7 1v0m7 0h1m-9 1h1m9 0v0m-9 1v0m9 0h1m-9 1h1m8 0v0m-8 1v0m9 0v6m-9-5h1m0 1v2m-1 1h1m-1 1v0m-1 1h1m8 0v0m-10 1v0m9 0h1m-11 1h1m9 0v0m-9 1v0m7 0h1m-7 1h6" stroke="#0000ff"/>
<path d="M136 242v0m-1 1h2m-1 1v0" stroke="#0000ff"/>
<path d="M153 304v0m-1 1v0m-2 1h1m-2 1v0m-1 1v0" stroke="#ffffff"/>
<path class="planet" d="M138 306h4m-6 1h1m6 0h1m-9 1v0m10 0v0m-11 1v0m12 0v0m-13 1v1m14-1v1m-15 1v4m16-4v4m-8-2v0m-7 3v1m14-1v1m-13 1v0m12 0v0m-11 1v0m10 0v0m-9 1h1m6 0h1m-6 1h4" stroke="#ff0000"/>
<path d="M157 300v0m-1 1h2m-1 1v0" stroke="#ff0000"/>
<path class="aspect" d="M161 298h1m2 0h1m2 1h1m2 0h1m2 0v0m1 1v0m2 0h1m2 0h1m2 1h1m2 0h1m2 0h1m2 1h1m2 0h1m2 0h1m2 1h1m2 0h1m2 0v0m1 1v0m2 0h1m2 0h1m2 1h1m2 0h1m2 0h1m2 1h1m2 0h1m2 0h1m2 1h1m2 0h1m2 0v0m1 1v0m2 0h1m2 0h1m2 1h1m2 0h1m2 0h1m2 1h1m2 0h1m2 0v0m1 1v0m2 0h1m2 0h1m2 0v0m1 1v0m2 0h1m2 0h1m2 1h1m2 0h1m2 0h1m2 1h1m2 0h1m2 0v0m1 1v0m2 0h1" stroke="#ff0000"/>
<path class="aspect" d="M141 243v0m196 0v0m-192 22v0m8 21v0m8 12v0m11 12v0m129 5v0m-120 3v0m27 14h1" stroke="#ffff00"/>
<path class="sg" d="M625 186v0m3 0v0m2 0h1m-7 1h1m3 0h1m3 0v1m-7 0v2m2-2v2m3-2v0m1 1v0m1 1v3m-6-2v2m5 1v0" stroke="#ff0000"/>
<path class="sg" d="M624 196v0m8 0v0m-7 1v0m6 0v0m-5 1v1m4-1v1m-6 1h8m-6 1v1m4-1v1m-5 1v0m6 0v0m-7 1v0m8 0v0" stroke="#ffff00"/>
<path class="sg" d="M625 206h1m4 0h1m-7 1v1m3-1v2m2-2v2m3-2v1m-7 1v0m6 0v0m-3 1v4" stroke="#00ff00"/>
<path class="sg" d="M625 216v0m6 0v0m-5 1v0m4 0v0m-3 1h2m-3 1v0m4 0v0m-5 1v2m6-2v2m-5 1v0m4 0v0m-3 1h2" stroke="#0000ff"/>
<path class="sg" d="M625 226v0m7 0v0m-6 1h5m-4 1v4m3-4v4m-4 1h5m-6 1v0m7 0v0" stroke="#ff0000"/>
<path class="sg" d="M625 236v0m7 0v0m-6 1h5m-4 1v4m3-4v4m-4 1h5m-6 1v0m7 0v0" stroke="#ffff00"/>
<path class="sg" d="M627 247h2m-4 1h1m4 0h1m-7 1v0m5 0v1m3-1v1m-7 0h1m-2 1v1m3-1v1m3-1h1m1 1v0m-7 1h1m4 0h1m-4 1h2" stroke="#00ff00"/>
<path class="sg" d="M624 256v0m2 0v0m2 0v0m-3 1v6m2-6v6m2-6v0m2 0v0m-2 1h2m-2 1v3m2-3v3m-1 1v0m-1 1v0m2 0v0" stroke="#0000ff"/>
<path class="sg" d="M627 268h2m-3 1v1m4-1v1m-6 1h3m2 0h3m-8 2h8" stroke="#ff0000"/>
<path class="sg" d="M624 276v0m2 0v0m2 0v0m-3 1v6m2-6v6m2-6v4m2 0v0m-2 1h3m-3 1v0m2 0v0m-1 1v0" stroke="#ffff00"/>
<path class="sg" d="M630 286h2m-1 1h1m-2 1v0m2 0v0m-7 1v0m4 0v0m-3 1v0m2 0v0m-1 1v0m-1 1v0m2 0v0m-3 1v0m4 0v0m-5 1v0" stroke="#00ff00"/>
<path class="sg" d="M630 296h2m-1 1h1m-2 1v0m2 0v0m-7 1v0m4 0v0m-3 1v0m2 0v0m-1 1v0m-1 1v0m2 0v0m-3 1v0m4 0v0m-5 1v0" stroke="#0000ff"/>
<path class="sg" d="M627 316h2m-4 1h1m4 0h1m-6 1v0m6 0v0m-7 1v2m8-2v2m-4-1v0m-3 2v0m6 0v0m-6 1h1m4 0h1m-4 1h2" stroke="#ff0000"/>
<path class="sg" d="M626 326h2m-3 1v0m4 0h1m-4 1v0m4 0v0m-3 1v2m4-2v2m-5 1v0m4 0v0m-5 1v0m4 0h1m-4 1h2" stroke="#0000ff"/>
<path class="sg" d="M626 336v0m4 0v0m-3 1h2m-3 1v2m4-2v2m-3 1h2m-1 1v0m-2 1h4m-2 1v0" stroke="#00ff00"/>
<path class="sg" d="M627 346h2m-3 1v2m4-2v2m-3 1h2m-1 1v0m-2 1h4m-2 1v1" stroke="#ffff00"/>
<path class="sg" d="M630 356h2m-1 1h1m-2 1v0m2 0v0m-6 1h1m2 0v0m-4 1v0m3 0v0m-4 1v1m5-1v1m-4 1v0m3 0v0m-2 1h1" stroke="#ff0000"/>
<path class="sg" d="M631 366v0m-6 1h1m4 0v5m-3-4v1m-1 1v1m-1 1v0m0 1h7m-2 1v0" stroke="#ff0000"/>
<path class="sg" d="M627 376v0m-2 1h4m-2 1v1m2 0h1m-3 1h1m3 0v1m-4 0v2m3-1v1m1 1v0" stroke="#ffff00"/>
<path class="sg" d="M625 386v0m6 0v0m-5 1v1m4-1v1m-2 0v0m-2 1h4m-4 1v0m2 0v1m2-1v0m-5 1v0m6 0v0m-4 1h2m-2 1v0m2 0v0m-1 1v0" stroke="#00ff00"/>
<path class="sg" d="M625 396v0m3 0v0m3 0v0m-7 1h1m2 0h2m2 0h1m-7 1v0m3 0v1m3-1v0m-5 1v0m4 0v0m-3 1h2m-1 1v0m-2 1h4m-2 1v1" stroke="#0000ff"/>
<path class="sg" d="M625 406v2m3-2v0m3 0v2m-4-1v0m2 0v0m-1 1v0m-2 1v0m4 0v0m-3 1h2m-1 1v0m-2 1h4m-2 1v1" stroke="#0000ff"/>
</g>
</svg>
<svg id="hn" width="480" height="480" viewBox="0 0 480 480">
<text transform="translate(71.5,307.5) scale(0.8,1)" fill="#ff0000">1</text>
<text transform="translate(154.5,400.5) scale(0.8,1)" fill="#ffff00">2</text>
<text transform="translate(259.5,418.5) scale(0.8,1)" fill="#00ff00">3</text>
<text transform="translate(336.5,389.5) scale(0.8,1)" fill="#0000ff">4</text>
<text transform="translate(384.5,340.5) scale(0.8,1)" fill="#ff0000">5</text>
<text transform="translate(409.5,278.5) scale(0.8,1)" fill="#ffff00">6</text>
<text transform="translate(401.5,179.5) scale(0.8,1)" fill="#00ff00">7</text>
<text transform="translate(318.5,86.5) scale(0.8,1)" fill="#0000ff">8</text>
<text transform="translate(213.5,68.5) scale(0.8,1)" fill="#ff0000">9</text>
<text transform="translate(132.5,97.5) scale(0.8,1)" fill="#ffff00">10</text>
<text transform="translate(84.5,146.5) scale(0.8,1)" fill="#00ff00">11</text>
<text transform="translate(59.5,208.5) scale(0.8,1)" fill="#0000ff">12</text>
</svg>
<div id="side">
<div><span class="w">Astrolog 5.41G</span></div>
<div>Inner ring:</div>
<div>Chart of the Moment</div>
<div><span class="w">Sat February 14, 2026</span></div>
<div><span class="w"> 5:08:00am (ST -8:00 GMT)</span></div>
<div>San Francisco, CA</div>
<div>122°41'00"W 37°79'00"N</div>
<div>Outer ring - Transit:</div>
<div><span class="y">Sat February 14, 2026</span></div>
<div><span class="y"> 3:08:51pm (ST +2:00 GMT)</span></div>
<div> 26°43'00"E 58°23'00"N</div>
<div>Placidus houses.</div>
<div>Tropical, Geocentric.</div>
<div><span class="y">Julian Day = 2461086.0478</span></div>
<div>Obliquity = 23°26'09"</div>
<div>Sidereal time:  0:33:60</div>
<div>DeltaT =  95.3656</div>
<div> </div>
<div><span class="r"> 1st house: </span><span class="y">18Cap35</span></div>
<div><span class="y"> 2nd house: </span><span class="b"> 0Pis51</span></div>
<div><span class="g"> 3rd house: </span><span class="r">10Ari54</span></div>
<div><span class="b"> 4th house: </span><span class="y">11Tau19</span></div>
<div><span class="r"> 5th house: </span><span class="g"> 4Gem55</span></div>
<div><span class="y"> 6th house: </span><span class="g">25Gem56</span></div>
<div><span class="g"> 7th house: </span><span class="b">18Can35</span></div>
<div><span class="b"> 8th house: </span><span class="y"> 0Vir51</span></div>
<div><span class="r"> 9th house: </span><span class="g">10Lib54</span></div>
<div><span class="y">10th house: </span><span class="b">11Sco19</span></div>
<div><span class="g">11th house: </span><span class="r"> 4Sag55</span></div>
<div><span class="b">12th house: </span><span class="r">25Sag56</span></div>
<div> </div>
<div><span class="r"> Sun: </span><span class="g">25Aqu51</span><span class="w">  </span>- 0°00'</div>
<div><span class="b">Moon: </span><span class="y">21Cap05</span><span class="w">  </span>- 3°55'</div>
<div><span class="g">Merc: </span><span class="b">12Pis36</span><span class="w">  </span>- 0°03'</div>
<div><span class="y">Venu: </span><span class="b"> 5Pis09</span><span class="w">  </span>- 1°28'</div>
<div><span class="r">Mars: </span><span class="g">17Aqu22</span><span class="w">  </span>- 1°05'</div>
<div><span class="r">Jupi: </span><span class="b">16Can04</span><span class="w">R </span>+ 0°20'</div>
<div><span class="y">Satu: </span><span class="r"> 0Ari04</span><span class="w">  </span>- 2°09'</div>
<div><span class="g">Uran: </span><span class="y">27Tau30</span><span class="w">  </span>- 0°11'</div>
<div><span class="b">Nept: </span><span class="r"> 0Ari33</span><span class="w">  </span>- 1°19'</div>
<div><span class="b">Plut: </span><span class="g"> 4Aqu07</span><span class="w">  </span>- 3°50'</div>
<div> </div>
<div>Fire: 2, Earth: 2,</div>
<div>Air : 3, Water: 3</div>
<div>Car: 4, Fix: 4, Mut: 2</div>
<div>Yang: 5, Yin: 5</div>
<div>M: 0, N: 10, A: 8, D: 2</div>
</div>
</div>
</body></html>
